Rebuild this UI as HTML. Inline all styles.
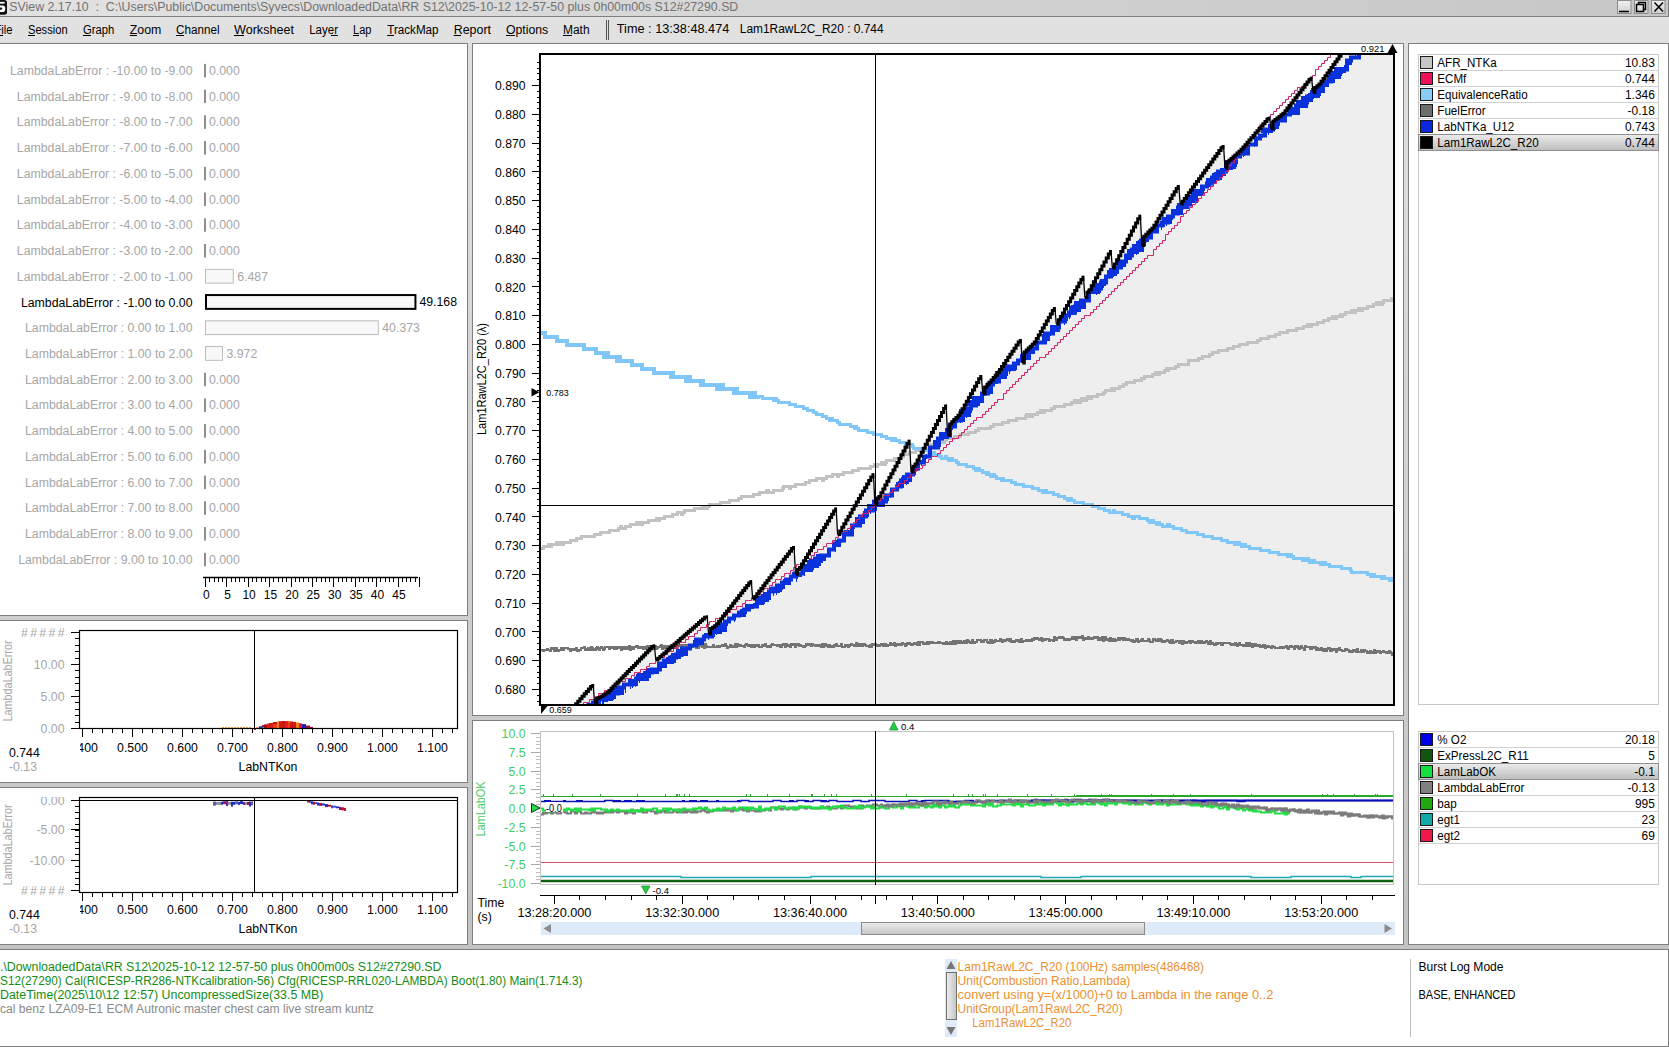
<!DOCTYPE html>
<html><head><meta charset="utf-8"><style>
html,body{margin:0;padding:0;width:1669px;height:1047px;overflow:hidden;background:#cacaca}
svg{display:block}
text{font-family:"Liberation Sans", sans-serif;white-space:pre}
</style></head><body>
<svg width="1669" height="1047" viewBox="0 0 1669 1047" xml:space="preserve">
<rect x="0" y="0" width="1669" height="1047" fill="#cccccc" />
<defs><linearGradient id="gapg" gradientUnits="userSpaceOnUse" x1="0" y1="43" x2="0" y2="949"><stop offset="0" stop-color="#e0e0e0"/><stop offset="1" stop-color="#c3c3c3"/></linearGradient></defs>
<rect x="0" y="43" width="1669" height="906" fill="url(#gapg)" />
<defs><linearGradient id="tg" x1="0" x2="1" y1="0" y2="0"><stop offset="0" stop-color="#e2e2e2"/><stop offset="1" stop-color="#c6c6c6"/></linearGradient><linearGradient id="btn" x1="0" x2="0" y1="0" y2="1"><stop offset="0" stop-color="#f0f0f0"/><stop offset="1" stop-color="#cfcfcf"/></linearGradient><linearGradient id="hl" x1="0" x2="0" y1="0" y2="1"><stop offset="0" stop-color="#ececec"/><stop offset="1" stop-color="#bdbdbd"/></linearGradient><linearGradient id="thumb" x1="0" x2="0" y1="0" y2="1"><stop offset="0" stop-color="#ededed"/><stop offset="1" stop-color="#c4c4c4"/></linearGradient><linearGradient id="vthumb" x1="0" x2="1" y1="0" y2="0"><stop offset="0" stop-color="#ededed"/><stop offset="1" stop-color="#c4c4c4"/></linearGradient></defs>
<rect x="0" y="0" width="1669" height="16" fill="url(#tg)" />
<line x1="0" y1="16.5" x2="1669" y2="16.5" stroke="#7f7f7f" stroke-width="1" />
<rect x="0" y="17" width="1669" height="26" fill="#e1e1e1" />
<rect x="-5" y="0" width="12" height="14.7" rx="2.5" fill="#111"/>
<rect x="-3" y="1.9" width="7.6" height="1.7" fill="#fff"/>
<path d="M-3 5.4 H2.6 Q5.3 5.4 5.3 8.7 Q5.3 12.1 2.6 12.1 H-3 Z" fill="#fff"/>
<path d="M-3 7.6 H1.2 Q2.2 7.6 2.2 8.7 Q2.2 9.8 1.2 9.8 H-3 Z" fill="#111"/>
<text x="9.3" y="11" font-size="12" fill="#727272" text-anchor="start" textLength="729" lengthAdjust="spacingAndGlyphs" >SView 2.17.10  :  C:\Users\Public\Documents\Syvecs\DownloadedData\RR S12\2025-10-12 12-57-50 plus 0h00m00s S12#27290.SD</text>
<rect x="1617.5" y="0.5" width="13.5" height="13" fill="url(#btn)" stroke="#8c8c8c" stroke-width="1"/>
<rect x="1634.5" y="0.5" width="13.5" height="13" fill="url(#btn)" stroke="#8c8c8c" stroke-width="1"/>
<rect x="1651.5" y="0.5" width="13.5" height="13" fill="url(#btn)" stroke="#8c8c8c" stroke-width="1"/>
<line x1="1619" y1="11.5" x2="1629" y2="11.5" stroke="#000" stroke-width="1.6" />
<rect x="1638.5" y="2.5" width="7" height="7" fill="none" stroke="#000" stroke-width="1.5"/>
<rect x="1636.5" y="4.5" width="7" height="7" fill="url(#btn)" stroke="#000" stroke-width="1.5"/>
<path d="M1654.5 2.5 L1663 11.5 M1663 2.5 L1654.5 11.5" stroke="#000" stroke-width="1.5"/>
<line x1="1668.5" y1="0" x2="1668.5" y2="16" stroke="#7f7f7f" stroke-width="1" />
<text x="-5.5" y="34" font-size="12" fill="#000" text-anchor="start" textLength="18.1" lengthAdjust="spacingAndGlyphs" >File</text>
<text x="28" y="34" font-size="12" fill="#000" text-anchor="start" textLength="39.6" lengthAdjust="spacingAndGlyphs" >Session</text>
<text x="83" y="34" font-size="12" fill="#000" text-anchor="start" textLength="31.3" lengthAdjust="spacingAndGlyphs" >Graph</text>
<text x="129.8" y="34" font-size="12" fill="#000" text-anchor="start" textLength="31.6" lengthAdjust="spacingAndGlyphs" >Zoom</text>
<text x="176.1" y="34" font-size="12" fill="#000" text-anchor="start" textLength="43.5" lengthAdjust="spacingAndGlyphs" >Channel</text>
<text x="234" y="34" font-size="12" fill="#000" text-anchor="start" textLength="60" lengthAdjust="spacingAndGlyphs" >Worksheet</text>
<text x="309.2" y="34" font-size="12" fill="#000" text-anchor="start" textLength="28.8" lengthAdjust="spacingAndGlyphs" >Layer</text>
<text x="353" y="34" font-size="12" fill="#000" text-anchor="start" textLength="18.4" lengthAdjust="spacingAndGlyphs" >Lap</text>
<text x="387.2" y="34" font-size="12" fill="#000" text-anchor="start" textLength="51.4" lengthAdjust="spacingAndGlyphs" >TrackMap</text>
<text x="453.7" y="34" font-size="12" fill="#000" text-anchor="start" textLength="37.3" lengthAdjust="spacingAndGlyphs" >Report</text>
<text x="506" y="34" font-size="12" fill="#000" text-anchor="start" textLength="42.2" lengthAdjust="spacingAndGlyphs" >Options</text>
<text x="563" y="34" font-size="12" fill="#000" text-anchor="start" textLength="26.6" lengthAdjust="spacingAndGlyphs" >Math</text>
<line x1="-1" y1="35.5" x2="3" y2="35.5" stroke="#000" stroke-width="1" />
<line x1="28" y1="35.5" x2="35" y2="35.5" stroke="#000" stroke-width="1" />
<line x1="83" y1="35.5" x2="91" y2="35.5" stroke="#000" stroke-width="1" />
<line x1="129.8" y1="35.5" x2="137" y2="35.5" stroke="#000" stroke-width="1" />
<line x1="176.1" y1="35.5" x2="184" y2="35.5" stroke="#000" stroke-width="1" />
<line x1="234" y1="35.5" x2="244" y2="35.5" stroke="#000" stroke-width="1" />
<line x1="331" y1="35.5" x2="338" y2="35.5" stroke="#000" stroke-width="1" />
<line x1="353" y1="35.5" x2="359" y2="35.5" stroke="#000" stroke-width="1" />
<line x1="387.2" y1="35.5" x2="394" y2="35.5" stroke="#000" stroke-width="1" />
<line x1="453.7" y1="35.5" x2="461" y2="35.5" stroke="#000" stroke-width="1" />
<line x1="506" y1="35.5" x2="515" y2="35.5" stroke="#000" stroke-width="1" />
<line x1="563" y1="35.5" x2="572" y2="35.5" stroke="#000" stroke-width="1" />
<line x1="606.5" y1="20" x2="606.5" y2="40" stroke="#555" stroke-width="1" />
<line x1="608.5" y1="20" x2="608.5" y2="40" stroke="#555" stroke-width="1" />
<text x="616.8" y="33" font-size="12" fill="#000" text-anchor="start" textLength="112.5" lengthAdjust="spacingAndGlyphs" >Time : 13:38:48.474</text>
<text x="739.8" y="33" font-size="12" fill="#000" text-anchor="start" textLength="143.8" lengthAdjust="spacingAndGlyphs" >Lam1RawL2C_R20 : 0.744</text>
<rect x="-2" y="43" width="470" height="573" fill="#fff" />
<rect x="-1.5" y="43.5" width="469" height="572" fill="none" stroke="#7f7f7f" stroke-width="1" />
<rect x="-2" y="620" width="470" height="163" fill="#fff" />
<rect x="-1.5" y="620.5" width="469" height="162" fill="none" stroke="#7f7f7f" stroke-width="1" />
<rect x="-2" y="787" width="470" height="158" fill="#fff" />
<rect x="-1.5" y="787.5" width="469" height="157" fill="none" stroke="#7f7f7f" stroke-width="1" />
<rect x="472" y="43" width="932" height="673" fill="#fff" />
<rect x="472.5" y="43.5" width="931" height="672" fill="none" stroke="#7f7f7f" stroke-width="1" />
<rect x="472" y="720" width="932" height="225" fill="#fff" />
<rect x="472.5" y="720.5" width="931" height="224" fill="none" stroke="#7f7f7f" stroke-width="1" />
<rect x="1408" y="43" width="261" height="902" fill="#fff" />
<rect x="1408.5" y="43.5" width="260" height="901" fill="none" stroke="#7f7f7f" stroke-width="1" />
<rect x="-2" y="949" width="1671" height="98" fill="#fff" />
<rect x="-1.5" y="949.5" width="1670" height="97" fill="none" stroke="#7f7f7f" stroke-width="1" />
<text x="192.5" y="74.9" font-size="12.3" fill="#a6a6a6" text-anchor="end">LambdaLabError : -10.00 to -9.00</text>
<rect x="204" y="63.900000000000006" width="2" height="13.5" fill="#8e8e8e" />
<text x="209" y="74.9" font-size="12.3" fill="#a6a6a6" text-anchor="start" >0.000</text>
<text x="192.5" y="100.6" font-size="12.3" fill="#a6a6a6" text-anchor="end">LambdaLabError : -9.00 to -8.00</text>
<rect x="204" y="89.63000000000001" width="2" height="13.5" fill="#8e8e8e" />
<text x="209" y="100.63000000000001" font-size="12.3" fill="#a6a6a6" text-anchor="start" >0.000</text>
<text x="192.5" y="126.4" font-size="12.3" fill="#a6a6a6" text-anchor="end">LambdaLabError : -8.00 to -7.00</text>
<rect x="204" y="115.36000000000001" width="2" height="13.5" fill="#8e8e8e" />
<text x="209" y="126.36000000000001" font-size="12.3" fill="#a6a6a6" text-anchor="start" >0.000</text>
<text x="192.5" y="152.1" font-size="12.3" fill="#a6a6a6" text-anchor="end">LambdaLabError : -7.00 to -6.00</text>
<rect x="204" y="141.09" width="2" height="13.5" fill="#8e8e8e" />
<text x="209" y="152.09" font-size="12.3" fill="#a6a6a6" text-anchor="start" >0.000</text>
<text x="192.5" y="177.8" font-size="12.3" fill="#a6a6a6" text-anchor="end">LambdaLabError : -6.00 to -5.00</text>
<rect x="204" y="166.82" width="2" height="13.5" fill="#8e8e8e" />
<text x="209" y="177.82" font-size="12.3" fill="#a6a6a6" text-anchor="start" >0.000</text>
<text x="192.5" y="203.6" font-size="12.3" fill="#a6a6a6" text-anchor="end">LambdaLabError : -5.00 to -4.00</text>
<rect x="204" y="192.55" width="2" height="13.5" fill="#8e8e8e" />
<text x="209" y="203.55" font-size="12.3" fill="#a6a6a6" text-anchor="start" >0.000</text>
<text x="192.5" y="229.3" font-size="12.3" fill="#a6a6a6" text-anchor="end">LambdaLabError : -4.00 to -3.00</text>
<rect x="204" y="218.28" width="2" height="13.5" fill="#8e8e8e" />
<text x="209" y="229.28" font-size="12.3" fill="#a6a6a6" text-anchor="start" >0.000</text>
<text x="192.5" y="255.0" font-size="12.3" fill="#a6a6a6" text-anchor="end">LambdaLabError : -3.00 to -2.00</text>
<rect x="204" y="244.01000000000002" width="2" height="13.5" fill="#8e8e8e" />
<text x="209" y="255.01000000000002" font-size="12.3" fill="#a6a6a6" text-anchor="start" >0.000</text>
<text x="192.5" y="280.7" font-size="12.3" fill="#a6a6a6" text-anchor="end">LambdaLabError : -2.00 to -1.00</text>
<rect x="205.5" y="269.34000000000003" width="27.764360000000003" height="13.8" fill="#f8f8f8" stroke="#bdbdbd" stroke-width="1" />
<text x="237.26436" y="280.74" font-size="12.3" fill="#a6a6a6" text-anchor="start" >6.487</text>
<text x="192.5" y="306.5" font-size="12.3" fill="#000" text-anchor="end">LambdaLabError : -1.00 to 0.00</text>
<rect x="206" y="295.07000000000005" width="209.43904" height="13.8" fill="#f8f8f8" stroke="#000" stroke-width="2" />
<text x="419.43904" y="306.47" font-size="12.3" fill="#000" text-anchor="start" >49.168</text>
<text x="192.5" y="332.2" font-size="12.3" fill="#a6a6a6" text-anchor="end">LambdaLabError : 0.00 to 1.00</text>
<rect x="205.5" y="320.80000000000007" width="172.79644" height="13.8" fill="#f8f8f8" stroke="#bdbdbd" stroke-width="1" />
<text x="382.29643999999996" y="332.20000000000005" font-size="12.3" fill="#a6a6a6" text-anchor="start" >40.373</text>
<text x="192.5" y="357.9" font-size="12.3" fill="#a6a6a6" text-anchor="end">LambdaLabError : 1.00 to 2.00</text>
<rect x="205.5" y="346.5300000000001" width="17.00016" height="13.8" fill="#f8f8f8" stroke="#bdbdbd" stroke-width="1" />
<text x="226.50016" y="357.93000000000006" font-size="12.3" fill="#a6a6a6" text-anchor="start" >3.972</text>
<text x="192.5" y="383.7" font-size="12.3" fill="#a6a6a6" text-anchor="end">LambdaLabError : 2.00 to 3.00</text>
<rect x="204" y="372.65999999999997" width="2" height="13.5" fill="#8e8e8e" />
<text x="209" y="383.65999999999997" font-size="12.3" fill="#a6a6a6" text-anchor="start" >0.000</text>
<text x="192.5" y="409.4" font-size="12.3" fill="#a6a6a6" text-anchor="end">LambdaLabError : 3.00 to 4.00</text>
<rect x="204" y="398.39" width="2" height="13.5" fill="#8e8e8e" />
<text x="209" y="409.39" font-size="12.3" fill="#a6a6a6" text-anchor="start" >0.000</text>
<text x="192.5" y="435.1" font-size="12.3" fill="#a6a6a6" text-anchor="end">LambdaLabError : 4.00 to 5.00</text>
<rect x="204" y="424.12" width="2" height="13.5" fill="#8e8e8e" />
<text x="209" y="435.12" font-size="12.3" fill="#a6a6a6" text-anchor="start" >0.000</text>
<text x="192.5" y="460.9" font-size="12.3" fill="#a6a6a6" text-anchor="end">LambdaLabError : 5.00 to 6.00</text>
<rect x="204" y="449.85" width="2" height="13.5" fill="#8e8e8e" />
<text x="209" y="460.85" font-size="12.3" fill="#a6a6a6" text-anchor="start" >0.000</text>
<text x="192.5" y="486.6" font-size="12.3" fill="#a6a6a6" text-anchor="end">LambdaLabError : 6.00 to 7.00</text>
<rect x="204" y="475.58000000000004" width="2" height="13.5" fill="#8e8e8e" />
<text x="209" y="486.58000000000004" font-size="12.3" fill="#a6a6a6" text-anchor="start" >0.000</text>
<text x="192.5" y="512.3" font-size="12.3" fill="#a6a6a6" text-anchor="end">LambdaLabError : 7.00 to 8.00</text>
<rect x="204" y="501.31000000000006" width="2" height="13.5" fill="#8e8e8e" />
<text x="209" y="512.3100000000001" font-size="12.3" fill="#a6a6a6" text-anchor="start" >0.000</text>
<text x="192.5" y="538.0" font-size="12.3" fill="#a6a6a6" text-anchor="end">LambdaLabError : 8.00 to 9.00</text>
<rect x="204" y="527.04" width="2" height="13.5" fill="#8e8e8e" />
<text x="209" y="538.04" font-size="12.3" fill="#a6a6a6" text-anchor="start" >0.000</text>
<text x="192.5" y="563.8" font-size="12.3" fill="#a6a6a6" text-anchor="end">LambdaLabError : 9.00 to 10.00</text>
<rect x="204" y="552.77" width="2" height="13.5" fill="#8e8e8e" />
<text x="209" y="563.77" font-size="12.3" fill="#a6a6a6" text-anchor="start" >0.000</text>
<line x1="203" y1="577.5" x2="418" y2="577.5" stroke="#000" stroke-width="1.3" />
<line x1="205.5" y1="577" x2="205.5" y2="587" stroke="#000" stroke-width="1" />
<line x1="209.5" y1="577" x2="209.5" y2="582" stroke="#000" stroke-width="1" />
<line x1="214.5" y1="577" x2="214.5" y2="582" stroke="#000" stroke-width="1" />
<line x1="218.5" y1="577" x2="218.5" y2="582" stroke="#000" stroke-width="1" />
<line x1="222.5" y1="577" x2="222.5" y2="582" stroke="#000" stroke-width="1" />
<line x1="226.5" y1="577" x2="226.5" y2="587" stroke="#000" stroke-width="1" />
<line x1="231.5" y1="577" x2="231.5" y2="582" stroke="#000" stroke-width="1" />
<line x1="235.5" y1="577" x2="235.5" y2="582" stroke="#000" stroke-width="1" />
<line x1="239.5" y1="577" x2="239.5" y2="582" stroke="#000" stroke-width="1" />
<line x1="244.5" y1="577" x2="244.5" y2="582" stroke="#000" stroke-width="1" />
<line x1="248.5" y1="577" x2="248.5" y2="587" stroke="#000" stroke-width="1" />
<line x1="252.5" y1="577" x2="252.5" y2="582" stroke="#000" stroke-width="1" />
<line x1="256.5" y1="577" x2="256.5" y2="582" stroke="#000" stroke-width="1" />
<line x1="261.5" y1="577" x2="261.5" y2="582" stroke="#000" stroke-width="1" />
<line x1="265.5" y1="577" x2="265.5" y2="582" stroke="#000" stroke-width="1" />
<line x1="269.5" y1="577" x2="269.5" y2="587" stroke="#000" stroke-width="1" />
<line x1="273.5" y1="577" x2="273.5" y2="582" stroke="#000" stroke-width="1" />
<line x1="278.5" y1="577" x2="278.5" y2="582" stroke="#000" stroke-width="1" />
<line x1="282.5" y1="577" x2="282.5" y2="582" stroke="#000" stroke-width="1" />
<line x1="286.5" y1="577" x2="286.5" y2="582" stroke="#000" stroke-width="1" />
<line x1="291.5" y1="577" x2="291.5" y2="587" stroke="#000" stroke-width="1" />
<line x1="295.5" y1="577" x2="295.5" y2="582" stroke="#000" stroke-width="1" />
<line x1="299.5" y1="577" x2="299.5" y2="582" stroke="#000" stroke-width="1" />
<line x1="303.5" y1="577" x2="303.5" y2="582" stroke="#000" stroke-width="1" />
<line x1="308.5" y1="577" x2="308.5" y2="582" stroke="#000" stroke-width="1" />
<line x1="312.5" y1="577" x2="312.5" y2="587" stroke="#000" stroke-width="1" />
<line x1="316.5" y1="577" x2="316.5" y2="582" stroke="#000" stroke-width="1" />
<line x1="321.5" y1="577" x2="321.5" y2="582" stroke="#000" stroke-width="1" />
<line x1="325.5" y1="577" x2="325.5" y2="582" stroke="#000" stroke-width="1" />
<line x1="329.5" y1="577" x2="329.5" y2="582" stroke="#000" stroke-width="1" />
<line x1="333.5" y1="577" x2="333.5" y2="587" stroke="#000" stroke-width="1" />
<line x1="338.5" y1="577" x2="338.5" y2="582" stroke="#000" stroke-width="1" />
<line x1="342.5" y1="577" x2="342.5" y2="582" stroke="#000" stroke-width="1" />
<line x1="346.5" y1="577" x2="346.5" y2="582" stroke="#000" stroke-width="1" />
<line x1="351.5" y1="577" x2="351.5" y2="582" stroke="#000" stroke-width="1" />
<line x1="355.5" y1="577" x2="355.5" y2="587" stroke="#000" stroke-width="1" />
<line x1="359.5" y1="577" x2="359.5" y2="582" stroke="#000" stroke-width="1" />
<line x1="363.5" y1="577" x2="363.5" y2="582" stroke="#000" stroke-width="1" />
<line x1="368.5" y1="577" x2="368.5" y2="582" stroke="#000" stroke-width="1" />
<line x1="372.5" y1="577" x2="372.5" y2="582" stroke="#000" stroke-width="1" />
<line x1="376.5" y1="577" x2="376.5" y2="587" stroke="#000" stroke-width="1" />
<line x1="380.5" y1="577" x2="380.5" y2="582" stroke="#000" stroke-width="1" />
<line x1="385.5" y1="577" x2="385.5" y2="582" stroke="#000" stroke-width="1" />
<line x1="389.5" y1="577" x2="389.5" y2="582" stroke="#000" stroke-width="1" />
<line x1="393.5" y1="577" x2="393.5" y2="582" stroke="#000" stroke-width="1" />
<line x1="398.5" y1="577" x2="398.5" y2="587" stroke="#000" stroke-width="1" />
<line x1="402.5" y1="577" x2="402.5" y2="582" stroke="#000" stroke-width="1" />
<line x1="406.5" y1="577" x2="406.5" y2="582" stroke="#000" stroke-width="1" />
<line x1="410.5" y1="577" x2="410.5" y2="582" stroke="#000" stroke-width="1" />
<line x1="415.5" y1="577" x2="415.5" y2="582" stroke="#000" stroke-width="1" />
<line x1="419.5" y1="577" x2="419.5" y2="587" stroke="#000" stroke-width="1" />
<text x="206.3" y="598.5" font-size="12" fill="#000" text-anchor="middle" >0</text>
<text x="227.70000000000002" y="598.5" font-size="12" fill="#000" text-anchor="middle" >5</text>
<text x="249.10000000000002" y="598.5" font-size="12" fill="#000" text-anchor="middle" >10</text>
<text x="270.5" y="598.5" font-size="12" fill="#000" text-anchor="middle" >15</text>
<text x="291.90000000000003" y="598.5" font-size="12" fill="#000" text-anchor="middle" >20</text>
<text x="313.3" y="598.5" font-size="12" fill="#000" text-anchor="middle" >25</text>
<text x="334.7" y="598.5" font-size="12" fill="#000" text-anchor="middle" >30</text>
<text x="356.1" y="598.5" font-size="12" fill="#000" text-anchor="middle" >35</text>
<text x="377.50000000000006" y="598.5" font-size="12" fill="#000" text-anchor="middle" >40</text>
<text x="398.90000000000003" y="598.5" font-size="12" fill="#000" text-anchor="middle" >45</text>
<clipPath id="sc1"><rect x="0" y="620" width="467" height="200"/></clipPath>
<g clip-path="url(#sc1)">
<line x1="75" y1="728.5" x2="79" y2="728.5" stroke="#000" stroke-width="1" />
<line x1="75" y1="722.5" x2="79" y2="722.5" stroke="#000" stroke-width="1" />
<line x1="75" y1="715.5" x2="79" y2="715.5" stroke="#000" stroke-width="1" />
<line x1="75" y1="709.5" x2="79" y2="709.5" stroke="#000" stroke-width="1" />
<line x1="75" y1="702.5" x2="79" y2="702.5" stroke="#000" stroke-width="1" />
<line x1="75" y1="696.5" x2="79" y2="696.5" stroke="#000" stroke-width="1" />
<line x1="75" y1="690.5" x2="79" y2="690.5" stroke="#000" stroke-width="1" />
<line x1="75" y1="683.5" x2="79" y2="683.5" stroke="#000" stroke-width="1" />
<line x1="75" y1="677.5" x2="79" y2="677.5" stroke="#000" stroke-width="1" />
<line x1="75" y1="670.5" x2="79" y2="670.5" stroke="#000" stroke-width="1" />
<line x1="75" y1="664.5" x2="79" y2="664.5" stroke="#000" stroke-width="1" />
<line x1="75" y1="658.5" x2="79" y2="658.5" stroke="#000" stroke-width="1" />
<line x1="75" y1="651.5" x2="79" y2="651.5" stroke="#000" stroke-width="1" />
<line x1="75" y1="645.5" x2="79" y2="645.5" stroke="#000" stroke-width="1" />
<line x1="75" y1="638.5" x2="79" y2="638.5" stroke="#000" stroke-width="1" />
<line x1="75" y1="632.5" x2="79" y2="632.5" stroke="#000" stroke-width="1" />
<line x1="71" y1="632.5" x2="79" y2="632.5" stroke="#000" stroke-width="1" />
<line x1="71" y1="664.5" x2="79" y2="664.5" stroke="#000" stroke-width="1" />
<line x1="71" y1="696.5" x2="79" y2="696.5" stroke="#000" stroke-width="1" />
<line x1="71" y1="728.5" x2="79" y2="728.5" stroke="#000" stroke-width="1" />
<text x="64.5" y="637.0" font-size="12.3" fill="#a6a6a6" text-anchor="end" textLength="43.5" lengthAdjust="spacing">#####</text>
<text x="64.5" y="669.0" font-size="12.3" fill="#a6a6a6" text-anchor="end">10.00</text>
<text x="64.5" y="701.0" font-size="12.3" fill="#a6a6a6" text-anchor="end">5.00</text>
<text x="64.5" y="733.0" font-size="12.3" fill="#a6a6a6" text-anchor="end">0.00</text>
</g>
<clipPath id="sc1x"><rect x="80" y="0" width="387" height="1047"/></clipPath>
<g clip-path="url(#sc1x)">
<line x1="82.5" y1="728" x2="82.5" y2="737" stroke="#000" stroke-width="1" />
<line x1="92.5" y1="728" x2="92.5" y2="733" stroke="#000" stroke-width="1" />
<line x1="102.5" y1="728" x2="102.5" y2="733" stroke="#000" stroke-width="1" />
<line x1="112.5" y1="728" x2="112.5" y2="733" stroke="#000" stroke-width="1" />
<line x1="122.5" y1="728" x2="122.5" y2="733" stroke="#000" stroke-width="1" />
<line x1="132.5" y1="728" x2="132.5" y2="737" stroke="#000" stroke-width="1" />
<line x1="142.5" y1="728" x2="142.5" y2="733" stroke="#000" stroke-width="1" />
<line x1="152.5" y1="728" x2="152.5" y2="733" stroke="#000" stroke-width="1" />
<line x1="162.5" y1="728" x2="162.5" y2="733" stroke="#000" stroke-width="1" />
<line x1="172.5" y1="728" x2="172.5" y2="733" stroke="#000" stroke-width="1" />
<line x1="182.5" y1="728" x2="182.5" y2="737" stroke="#000" stroke-width="1" />
<line x1="192.5" y1="728" x2="192.5" y2="733" stroke="#000" stroke-width="1" />
<line x1="202.5" y1="728" x2="202.5" y2="733" stroke="#000" stroke-width="1" />
<line x1="212.5" y1="728" x2="212.5" y2="733" stroke="#000" stroke-width="1" />
<line x1="222.5" y1="728" x2="222.5" y2="733" stroke="#000" stroke-width="1" />
<line x1="232.5" y1="728" x2="232.5" y2="737" stroke="#000" stroke-width="1" />
<line x1="242.5" y1="728" x2="242.5" y2="733" stroke="#000" stroke-width="1" />
<line x1="252.5" y1="728" x2="252.5" y2="733" stroke="#000" stroke-width="1" />
<line x1="262.5" y1="728" x2="262.5" y2="733" stroke="#000" stroke-width="1" />
<line x1="272.5" y1="728" x2="272.5" y2="733" stroke="#000" stroke-width="1" />
<line x1="282.5" y1="728" x2="282.5" y2="737" stroke="#000" stroke-width="1" />
<line x1="292.5" y1="728" x2="292.5" y2="733" stroke="#000" stroke-width="1" />
<line x1="302.5" y1="728" x2="302.5" y2="733" stroke="#000" stroke-width="1" />
<line x1="312.5" y1="728" x2="312.5" y2="733" stroke="#000" stroke-width="1" />
<line x1="322.5" y1="728" x2="322.5" y2="733" stroke="#000" stroke-width="1" />
<line x1="332.5" y1="728" x2="332.5" y2="737" stroke="#000" stroke-width="1" />
<line x1="342.5" y1="728" x2="342.5" y2="733" stroke="#000" stroke-width="1" />
<line x1="352.5" y1="728" x2="352.5" y2="733" stroke="#000" stroke-width="1" />
<line x1="362.5" y1="728" x2="362.5" y2="733" stroke="#000" stroke-width="1" />
<line x1="372.5" y1="728" x2="372.5" y2="733" stroke="#000" stroke-width="1" />
<line x1="382.5" y1="728" x2="382.5" y2="737" stroke="#000" stroke-width="1" />
<line x1="392.5" y1="728" x2="392.5" y2="733" stroke="#000" stroke-width="1" />
<line x1="402.5" y1="728" x2="402.5" y2="733" stroke="#000" stroke-width="1" />
<line x1="412.5" y1="728" x2="412.5" y2="733" stroke="#000" stroke-width="1" />
<line x1="422.5" y1="728" x2="422.5" y2="733" stroke="#000" stroke-width="1" />
<line x1="432.5" y1="728" x2="432.5" y2="737" stroke="#000" stroke-width="1" />
<line x1="442.5" y1="728" x2="442.5" y2="733" stroke="#000" stroke-width="1" />
<line x1="452.5" y1="728" x2="452.5" y2="733" stroke="#000" stroke-width="1" />
<text x="82.5" y="751.5" font-size="12.3" fill="#000" text-anchor="middle">0.400</text>
<text x="132.5" y="751.5" font-size="12.3" fill="#000" text-anchor="middle">0.500</text>
<text x="182.5" y="751.5" font-size="12.3" fill="#000" text-anchor="middle">0.600</text>
<text x="232.5" y="751.5" font-size="12.3" fill="#000" text-anchor="middle">0.700</text>
<text x="282.5" y="751.5" font-size="12.3" fill="#000" text-anchor="middle">0.800</text>
<text x="332.5" y="751.5" font-size="12.3" fill="#000" text-anchor="middle">0.900</text>
<text x="382.5" y="751.5" font-size="12.3" fill="#000" text-anchor="middle">1.000</text>
<text x="432.5" y="751.5" font-size="12.3" fill="#000" text-anchor="middle">1.100</text>
</g>
<rect x="222" y="727" width="2" height="1" fill="#f0a040"/>
<rect x="225" y="727" width="2" height="1" fill="#f0a040"/>
<rect x="228" y="727" width="2" height="1" fill="#f0a040"/>
<rect x="231" y="727" width="2" height="1" fill="#f0a040"/>
<rect x="234" y="727" width="2" height="1" fill="#f0a040"/>
<rect x="237" y="727" width="2" height="1" fill="#f0a040"/>
<rect x="240" y="727" width="2" height="1" fill="#f0a040"/>
<rect x="243" y="727" width="2" height="1" fill="#f0a040"/>
<rect x="246" y="727" width="2" height="1" fill="#f0a040"/>
<rect x="249" y="727" width="2" height="1" fill="#f0a040"/>
<rect x="254" y="728.0" width="2" height="1.5" fill="#f09030"/>
<rect x="254" y="728.0" width="2" height="2" fill="#c81010"/>
<rect x="256" y="727.3" width="3" height="1.5" fill="#f09030"/>
<rect x="259" y="726.2" width="3" height="2.3" fill="#2040c0"/>
<rect x="262" y="725.1" width="2" height="3.4" fill="#20a0e0"/>
<rect x="262" y="725.1" width="2" height="2" fill="#c81010"/>
<rect x="264" y="724.4" width="3" height="4.1" fill="#a01010"/>
<rect x="267" y="723.5" width="2" height="5.0" fill="#e02020"/>
<rect x="269" y="723.0" width="4" height="5.5" fill="#d01818"/>
<rect x="273" y="722.1" width="4" height="6.4" fill="#f04010"/>
<rect x="273" y="722.1" width="4" height="2" fill="#c81010"/>
<rect x="277" y="721.4" width="2" height="7.1" fill="#f08020"/>
<rect x="279" y="721.2" width="3" height="7.3" fill="#d01818"/>
<rect x="282" y="721.0" width="3" height="7.5" fill="#d01818"/>
<rect x="282" y="721.0" width="3" height="2" fill="#c81010"/>
<rect x="285" y="721.0" width="3" height="7.5" fill="#e02020"/>
<rect x="288" y="721.2" width="2" height="7.3" fill="#f04010"/>
<rect x="288" y="721.2" width="2" height="2" fill="#f07010"/>
<rect x="290" y="721.4" width="3" height="7.1" fill="#d01818"/>
<rect x="293" y="721.9" width="3" height="6.6" fill="#d01818"/>
<rect x="296" y="722.5" width="3" height="6.0" fill="#f08020"/>
<rect x="299" y="723.3" width="3" height="5.2" fill="#e02020"/>
<rect x="302" y="724.1" width="4" height="4.4" fill="#2020c0"/>
<rect x="306" y="725.5" width="4" height="3.0" fill="#a01040"/>
<rect x="310" y="726.9" width="3" height="1.6" fill="#a01040"/>
<rect x="79.5" y="630.5" width="378" height="98" fill="none" stroke="#000" stroke-width="1.2"/>
<line x1="254.5" y1="630" x2="254.5" y2="728" stroke="#000" stroke-width="1" />
<text x="268" y="771" font-size="12.3" fill="#000" text-anchor="middle" >LabNTKon</text>
<text x="9" y="756.5" font-size="12.3" fill="#000" text-anchor="start" >0.744</text>
<text x="9" y="770.5" font-size="12.3" fill="#a6a6a6" text-anchor="start" >-0.13</text>
<text x="0" y="0" font-size="12" fill="#a6a6a6" text-anchor="middle" transform="translate(11.5,681) rotate(-90)" textLength="81" lengthAdjust="spacingAndGlyphs">LambdaLabError</text>
<clipPath id="sc2"><rect x="0" y="797" width="467" height="200"/></clipPath>
<g clip-path="url(#sc2)">
<line x1="75" y1="800.5" x2="79" y2="800.5" stroke="#000" stroke-width="1" />
<line x1="75" y1="806.5" x2="79" y2="806.5" stroke="#000" stroke-width="1" />
<line x1="75" y1="812.5" x2="79" y2="812.5" stroke="#000" stroke-width="1" />
<line x1="75" y1="818.5" x2="79" y2="818.5" stroke="#000" stroke-width="1" />
<line x1="75" y1="824.5" x2="79" y2="824.5" stroke="#000" stroke-width="1" />
<line x1="75" y1="830.5" x2="79" y2="830.5" stroke="#000" stroke-width="1" />
<line x1="75" y1="836.5" x2="79" y2="836.5" stroke="#000" stroke-width="1" />
<line x1="75" y1="842.5" x2="79" y2="842.5" stroke="#000" stroke-width="1" />
<line x1="75" y1="848.5" x2="79" y2="848.5" stroke="#000" stroke-width="1" />
<line x1="75" y1="854.5" x2="79" y2="854.5" stroke="#000" stroke-width="1" />
<line x1="75" y1="860.5" x2="79" y2="860.5" stroke="#000" stroke-width="1" />
<line x1="75" y1="866.5" x2="79" y2="866.5" stroke="#000" stroke-width="1" />
<line x1="75" y1="872.5" x2="79" y2="872.5" stroke="#000" stroke-width="1" />
<line x1="75" y1="878.5" x2="79" y2="878.5" stroke="#000" stroke-width="1" />
<line x1="75" y1="884.5" x2="79" y2="884.5" stroke="#000" stroke-width="1" />
<line x1="75" y1="890.5" x2="79" y2="890.5" stroke="#000" stroke-width="1" />
<line x1="71" y1="800.5" x2="79" y2="800.5" stroke="#000" stroke-width="1" />
<line x1="71" y1="829.5" x2="79" y2="829.5" stroke="#000" stroke-width="1" />
<line x1="71" y1="860.5" x2="79" y2="860.5" stroke="#000" stroke-width="1" />
<line x1="71" y1="890.5" x2="79" y2="890.5" stroke="#000" stroke-width="1" />
<text x="64.5" y="804.5" font-size="12.3" fill="#a6a6a6" text-anchor="end">0.00</text>
<text x="64.5" y="834.0" font-size="12.3" fill="#a6a6a6" text-anchor="end">-5.00</text>
<text x="64.5" y="864.5" font-size="12.3" fill="#a6a6a6" text-anchor="end">-10.00</text>
<text x="64.5" y="894.5" font-size="12.3" fill="#a6a6a6" text-anchor="end" textLength="43.5" lengthAdjust="spacing">#####</text>
</g>
<clipPath id="sc2x"><rect x="80" y="0" width="387" height="1047"/></clipPath>
<g clip-path="url(#sc2x)">
<line x1="82.5" y1="892" x2="82.5" y2="901" stroke="#000" stroke-width="1" />
<line x1="92.5" y1="892" x2="92.5" y2="897" stroke="#000" stroke-width="1" />
<line x1="102.5" y1="892" x2="102.5" y2="897" stroke="#000" stroke-width="1" />
<line x1="112.5" y1="892" x2="112.5" y2="897" stroke="#000" stroke-width="1" />
<line x1="122.5" y1="892" x2="122.5" y2="897" stroke="#000" stroke-width="1" />
<line x1="132.5" y1="892" x2="132.5" y2="901" stroke="#000" stroke-width="1" />
<line x1="142.5" y1="892" x2="142.5" y2="897" stroke="#000" stroke-width="1" />
<line x1="152.5" y1="892" x2="152.5" y2="897" stroke="#000" stroke-width="1" />
<line x1="162.5" y1="892" x2="162.5" y2="897" stroke="#000" stroke-width="1" />
<line x1="172.5" y1="892" x2="172.5" y2="897" stroke="#000" stroke-width="1" />
<line x1="182.5" y1="892" x2="182.5" y2="901" stroke="#000" stroke-width="1" />
<line x1="192.5" y1="892" x2="192.5" y2="897" stroke="#000" stroke-width="1" />
<line x1="202.5" y1="892" x2="202.5" y2="897" stroke="#000" stroke-width="1" />
<line x1="212.5" y1="892" x2="212.5" y2="897" stroke="#000" stroke-width="1" />
<line x1="222.5" y1="892" x2="222.5" y2="897" stroke="#000" stroke-width="1" />
<line x1="232.5" y1="892" x2="232.5" y2="901" stroke="#000" stroke-width="1" />
<line x1="242.5" y1="892" x2="242.5" y2="897" stroke="#000" stroke-width="1" />
<line x1="252.5" y1="892" x2="252.5" y2="897" stroke="#000" stroke-width="1" />
<line x1="262.5" y1="892" x2="262.5" y2="897" stroke="#000" stroke-width="1" />
<line x1="272.5" y1="892" x2="272.5" y2="897" stroke="#000" stroke-width="1" />
<line x1="282.5" y1="892" x2="282.5" y2="901" stroke="#000" stroke-width="1" />
<line x1="292.5" y1="892" x2="292.5" y2="897" stroke="#000" stroke-width="1" />
<line x1="302.5" y1="892" x2="302.5" y2="897" stroke="#000" stroke-width="1" />
<line x1="312.5" y1="892" x2="312.5" y2="897" stroke="#000" stroke-width="1" />
<line x1="322.5" y1="892" x2="322.5" y2="897" stroke="#000" stroke-width="1" />
<line x1="332.5" y1="892" x2="332.5" y2="901" stroke="#000" stroke-width="1" />
<line x1="342.5" y1="892" x2="342.5" y2="897" stroke="#000" stroke-width="1" />
<line x1="352.5" y1="892" x2="352.5" y2="897" stroke="#000" stroke-width="1" />
<line x1="362.5" y1="892" x2="362.5" y2="897" stroke="#000" stroke-width="1" />
<line x1="372.5" y1="892" x2="372.5" y2="897" stroke="#000" stroke-width="1" />
<line x1="382.5" y1="892" x2="382.5" y2="901" stroke="#000" stroke-width="1" />
<line x1="392.5" y1="892" x2="392.5" y2="897" stroke="#000" stroke-width="1" />
<line x1="402.5" y1="892" x2="402.5" y2="897" stroke="#000" stroke-width="1" />
<line x1="412.5" y1="892" x2="412.5" y2="897" stroke="#000" stroke-width="1" />
<line x1="422.5" y1="892" x2="422.5" y2="897" stroke="#000" stroke-width="1" />
<line x1="432.5" y1="892" x2="432.5" y2="901" stroke="#000" stroke-width="1" />
<line x1="442.5" y1="892" x2="442.5" y2="897" stroke="#000" stroke-width="1" />
<line x1="452.5" y1="892" x2="452.5" y2="897" stroke="#000" stroke-width="1" />
<text x="82.5" y="913.5" font-size="12.3" fill="#000" text-anchor="middle">0.400</text>
<text x="132.5" y="913.5" font-size="12.3" fill="#000" text-anchor="middle">0.500</text>
<text x="182.5" y="913.5" font-size="12.3" fill="#000" text-anchor="middle">0.600</text>
<text x="232.5" y="913.5" font-size="12.3" fill="#000" text-anchor="middle">0.700</text>
<text x="282.5" y="913.5" font-size="12.3" fill="#000" text-anchor="middle">0.800</text>
<text x="332.5" y="913.5" font-size="12.3" fill="#000" text-anchor="middle">0.900</text>
<text x="382.5" y="913.5" font-size="12.3" fill="#000" text-anchor="middle">1.000</text>
<text x="432.5" y="913.5" font-size="12.3" fill="#000" text-anchor="middle">1.100</text>
</g>
<rect x="213" y="801.6" width="3" height="4" fill="#6060a0"/>
<rect x="216" y="801.9" width="2" height="3" fill="#9090a0"/>
<rect x="218" y="801.9" width="3" height="3" fill="#9090a0"/>
<rect x="221" y="801.7" width="2" height="3" fill="#2030c0"/>
<rect x="223" y="801.2" width="3" height="3" fill="#802080"/>
<rect x="226" y="801.1" width="2" height="5" fill="#802080"/>
<rect x="228" y="801.8" width="3" height="3" fill="#9090a0"/>
<rect x="231" y="801.7" width="2" height="5" fill="#2030c0"/>
<rect x="233" y="801.8" width="2" height="3" fill="#2030c0"/>
<rect x="235" y="801.3" width="3" height="3" fill="#6060a0"/>
<rect x="238" y="801.9" width="2" height="3" fill="#2030c0"/>
<rect x="240" y="801.1" width="3" height="3" fill="#2030c0"/>
<rect x="243" y="802.0" width="2" height="3" fill="#802080"/>
<rect x="245" y="801.9" width="2" height="3" fill="#9090a0"/>
<rect x="247" y="801.9" width="2" height="3" fill="#a01040"/>
<rect x="249" y="801.5" width="2" height="5" fill="#2030c0"/>
<rect x="251" y="801.4" width="2" height="4" fill="#6060a0"/>
<rect x="307" y="800.5" width="2" height="2" fill="#c01030"/>
<rect x="309" y="800.9" width="2" height="2" fill="#4050d0"/>
<rect x="311" y="801.3" width="2" height="3" fill="#2030c0"/>
<rect x="313" y="801.7" width="2" height="3" fill="#c01030"/>
<rect x="315" y="802.1" width="2" height="2" fill="#4050d0"/>
<rect x="317" y="802.5" width="2" height="3" fill="#2030c0"/>
<rect x="319" y="802.9" width="3" height="3" fill="#c01030"/>
<rect x="322" y="803.5" width="3" height="2" fill="#2030c0"/>
<rect x="325" y="804.1" width="3" height="3" fill="#2030c0"/>
<rect x="328" y="804.7" width="3" height="2" fill="#c01030"/>
<rect x="331" y="805.3" width="2" height="3" fill="#4050d0"/>
<rect x="333" y="805.7" width="3" height="2" fill="#4050d0"/>
<rect x="336" y="806.3" width="3" height="2" fill="#2030c0"/>
<rect x="339" y="806.9" width="2" height="3" fill="#901040"/>
<rect x="341" y="807.3" width="3" height="3" fill="#c01030"/>
<rect x="344" y="807.9" width="2" height="3" fill="#c01030"/>
<line x1="80" y1="800.5" x2="457" y2="800.5" stroke="#000" stroke-width="1"/>
<rect x="79.5" y="797.5" width="378" height="95" fill="none" stroke="#000" stroke-width="1.2"/>
<line x1="254.5" y1="797" x2="254.5" y2="892" stroke="#000" stroke-width="1" />
<text x="268" y="933" font-size="12.3" fill="#000" text-anchor="middle" >LabNTKon</text>
<text x="9" y="918.5" font-size="12.3" fill="#000" text-anchor="start" >0.744</text>
<text x="9" y="932.5" font-size="12.3" fill="#a6a6a6" text-anchor="start" >-0.13</text>
<text x="0" y="0" font-size="12" fill="#a6a6a6" text-anchor="middle" transform="translate(11.5,845) rotate(-90)" textLength="81" lengthAdjust="spacingAndGlyphs">LambdaLabError</text>
<clipPath id="mclip"><rect x="541" y="55" width="852" height="650"/></clipPath>
<line x1="537" y1="701.5" x2="539" y2="701.5" stroke="#000" stroke-width="1" />
<line x1="537" y1="695.5" x2="539" y2="695.5" stroke="#000" stroke-width="1" />
<line x1="532" y1="689.5" x2="539" y2="689.5" stroke="#000" stroke-width="1" />
<text x="525.5" y="694.2" font-size="12.2" fill="#000" text-anchor="end">0.680</text>
<line x1="537" y1="683.5" x2="539" y2="683.5" stroke="#000" stroke-width="1" />
<line x1="537" y1="677.5" x2="539" y2="677.5" stroke="#000" stroke-width="1" />
<line x1="537" y1="672.5" x2="539" y2="672.5" stroke="#000" stroke-width="1" />
<line x1="537" y1="666.5" x2="539" y2="666.5" stroke="#000" stroke-width="1" />
<line x1="532" y1="660.5" x2="539" y2="660.5" stroke="#000" stroke-width="1" />
<text x="525.5" y="665.4" font-size="12.2" fill="#000" text-anchor="end">0.690</text>
<line x1="537" y1="654.5" x2="539" y2="654.5" stroke="#000" stroke-width="1" />
<line x1="537" y1="649.5" x2="539" y2="649.5" stroke="#000" stroke-width="1" />
<line x1="537" y1="643.5" x2="539" y2="643.5" stroke="#000" stroke-width="1" />
<line x1="537" y1="637.5" x2="539" y2="637.5" stroke="#000" stroke-width="1" />
<line x1="532" y1="631.5" x2="539" y2="631.5" stroke="#000" stroke-width="1" />
<text x="525.5" y="636.7" font-size="12.2" fill="#000" text-anchor="end">0.700</text>
<line x1="537" y1="626.5" x2="539" y2="626.5" stroke="#000" stroke-width="1" />
<line x1="537" y1="620.5" x2="539" y2="620.5" stroke="#000" stroke-width="1" />
<line x1="537" y1="614.5" x2="539" y2="614.5" stroke="#000" stroke-width="1" />
<line x1="537" y1="608.5" x2="539" y2="608.5" stroke="#000" stroke-width="1" />
<line x1="532" y1="603.5" x2="539" y2="603.5" stroke="#000" stroke-width="1" />
<text x="525.5" y="607.9" font-size="12.2" fill="#000" text-anchor="end">0.710</text>
<line x1="537" y1="597.5" x2="539" y2="597.5" stroke="#000" stroke-width="1" />
<line x1="537" y1="591.5" x2="539" y2="591.5" stroke="#000" stroke-width="1" />
<line x1="537" y1="585.5" x2="539" y2="585.5" stroke="#000" stroke-width="1" />
<line x1="537" y1="580.5" x2="539" y2="580.5" stroke="#000" stroke-width="1" />
<line x1="532" y1="574.5" x2="539" y2="574.5" stroke="#000" stroke-width="1" />
<text x="525.5" y="579.2" font-size="12.2" fill="#000" text-anchor="end">0.720</text>
<line x1="537" y1="568.5" x2="539" y2="568.5" stroke="#000" stroke-width="1" />
<line x1="537" y1="562.5" x2="539" y2="562.5" stroke="#000" stroke-width="1" />
<line x1="537" y1="557.5" x2="539" y2="557.5" stroke="#000" stroke-width="1" />
<line x1="537" y1="551.5" x2="539" y2="551.5" stroke="#000" stroke-width="1" />
<line x1="532" y1="545.5" x2="539" y2="545.5" stroke="#000" stroke-width="1" />
<text x="525.5" y="550.4" font-size="12.2" fill="#000" text-anchor="end">0.730</text>
<line x1="537" y1="539.5" x2="539" y2="539.5" stroke="#000" stroke-width="1" />
<line x1="537" y1="534.5" x2="539" y2="534.5" stroke="#000" stroke-width="1" />
<line x1="537" y1="528.5" x2="539" y2="528.5" stroke="#000" stroke-width="1" />
<line x1="537" y1="522.5" x2="539" y2="522.5" stroke="#000" stroke-width="1" />
<line x1="532" y1="516.5" x2="539" y2="516.5" stroke="#000" stroke-width="1" />
<text x="525.5" y="521.6" font-size="12.2" fill="#000" text-anchor="end">0.740</text>
<line x1="537" y1="511.5" x2="539" y2="511.5" stroke="#000" stroke-width="1" />
<line x1="537" y1="505.5" x2="539" y2="505.5" stroke="#000" stroke-width="1" />
<line x1="537" y1="499.5" x2="539" y2="499.5" stroke="#000" stroke-width="1" />
<line x1="537" y1="493.5" x2="539" y2="493.5" stroke="#000" stroke-width="1" />
<line x1="532" y1="488.5" x2="539" y2="488.5" stroke="#000" stroke-width="1" />
<text x="525.5" y="492.9" font-size="12.2" fill="#000" text-anchor="end">0.750</text>
<line x1="537" y1="482.5" x2="539" y2="482.5" stroke="#000" stroke-width="1" />
<line x1="537" y1="476.5" x2="539" y2="476.5" stroke="#000" stroke-width="1" />
<line x1="537" y1="470.5" x2="539" y2="470.5" stroke="#000" stroke-width="1" />
<line x1="537" y1="465.5" x2="539" y2="465.5" stroke="#000" stroke-width="1" />
<line x1="532" y1="459.5" x2="539" y2="459.5" stroke="#000" stroke-width="1" />
<text x="525.5" y="464.1" font-size="12.2" fill="#000" text-anchor="end">0.760</text>
<line x1="537" y1="453.5" x2="539" y2="453.5" stroke="#000" stroke-width="1" />
<line x1="537" y1="447.5" x2="539" y2="447.5" stroke="#000" stroke-width="1" />
<line x1="537" y1="442.5" x2="539" y2="442.5" stroke="#000" stroke-width="1" />
<line x1="537" y1="436.5" x2="539" y2="436.5" stroke="#000" stroke-width="1" />
<line x1="532" y1="430.5" x2="539" y2="430.5" stroke="#000" stroke-width="1" />
<text x="525.5" y="435.3" font-size="12.2" fill="#000" text-anchor="end">0.770</text>
<line x1="537" y1="424.5" x2="539" y2="424.5" stroke="#000" stroke-width="1" />
<line x1="537" y1="419.5" x2="539" y2="419.5" stroke="#000" stroke-width="1" />
<line x1="537" y1="413.5" x2="539" y2="413.5" stroke="#000" stroke-width="1" />
<line x1="537" y1="407.5" x2="539" y2="407.5" stroke="#000" stroke-width="1" />
<line x1="532" y1="401.5" x2="539" y2="401.5" stroke="#000" stroke-width="1" />
<text x="525.5" y="406.6" font-size="12.2" fill="#000" text-anchor="end">0.780</text>
<line x1="537" y1="396.5" x2="539" y2="396.5" stroke="#000" stroke-width="1" />
<line x1="537" y1="390.5" x2="539" y2="390.5" stroke="#000" stroke-width="1" />
<line x1="537" y1="384.5" x2="539" y2="384.5" stroke="#000" stroke-width="1" />
<line x1="537" y1="378.5" x2="539" y2="378.5" stroke="#000" stroke-width="1" />
<line x1="532" y1="373.5" x2="539" y2="373.5" stroke="#000" stroke-width="1" />
<text x="525.5" y="377.8" font-size="12.2" fill="#000" text-anchor="end">0.790</text>
<line x1="537" y1="367.5" x2="539" y2="367.5" stroke="#000" stroke-width="1" />
<line x1="537" y1="361.5" x2="539" y2="361.5" stroke="#000" stroke-width="1" />
<line x1="537" y1="355.5" x2="539" y2="355.5" stroke="#000" stroke-width="1" />
<line x1="537" y1="350.5" x2="539" y2="350.5" stroke="#000" stroke-width="1" />
<line x1="532" y1="344.5" x2="539" y2="344.5" stroke="#000" stroke-width="1" />
<text x="525.5" y="349.1" font-size="12.2" fill="#000" text-anchor="end">0.800</text>
<line x1="537" y1="338.5" x2="539" y2="338.5" stroke="#000" stroke-width="1" />
<line x1="537" y1="332.5" x2="539" y2="332.5" stroke="#000" stroke-width="1" />
<line x1="537" y1="327.5" x2="539" y2="327.5" stroke="#000" stroke-width="1" />
<line x1="537" y1="321.5" x2="539" y2="321.5" stroke="#000" stroke-width="1" />
<line x1="532" y1="315.5" x2="539" y2="315.5" stroke="#000" stroke-width="1" />
<text x="525.5" y="320.3" font-size="12.2" fill="#000" text-anchor="end">0.810</text>
<line x1="537" y1="309.5" x2="539" y2="309.5" stroke="#000" stroke-width="1" />
<line x1="537" y1="304.5" x2="539" y2="304.5" stroke="#000" stroke-width="1" />
<line x1="537" y1="298.5" x2="539" y2="298.5" stroke="#000" stroke-width="1" />
<line x1="537" y1="292.5" x2="539" y2="292.5" stroke="#000" stroke-width="1" />
<line x1="532" y1="286.5" x2="539" y2="286.5" stroke="#000" stroke-width="1" />
<text x="525.5" y="291.5" font-size="12.2" fill="#000" text-anchor="end">0.820</text>
<line x1="537" y1="281.5" x2="539" y2="281.5" stroke="#000" stroke-width="1" />
<line x1="537" y1="275.5" x2="539" y2="275.5" stroke="#000" stroke-width="1" />
<line x1="537" y1="269.5" x2="539" y2="269.5" stroke="#000" stroke-width="1" />
<line x1="537" y1="263.5" x2="539" y2="263.5" stroke="#000" stroke-width="1" />
<line x1="532" y1="258.5" x2="539" y2="258.5" stroke="#000" stroke-width="1" />
<text x="525.5" y="262.8" font-size="12.2" fill="#000" text-anchor="end">0.830</text>
<line x1="537" y1="252.5" x2="539" y2="252.5" stroke="#000" stroke-width="1" />
<line x1="537" y1="246.5" x2="539" y2="246.5" stroke="#000" stroke-width="1" />
<line x1="537" y1="240.5" x2="539" y2="240.5" stroke="#000" stroke-width="1" />
<line x1="537" y1="235.5" x2="539" y2="235.5" stroke="#000" stroke-width="1" />
<line x1="532" y1="229.5" x2="539" y2="229.5" stroke="#000" stroke-width="1" />
<text x="525.5" y="234.0" font-size="12.2" fill="#000" text-anchor="end">0.840</text>
<line x1="537" y1="223.5" x2="539" y2="223.5" stroke="#000" stroke-width="1" />
<line x1="537" y1="217.5" x2="539" y2="217.5" stroke="#000" stroke-width="1" />
<line x1="537" y1="212.5" x2="539" y2="212.5" stroke="#000" stroke-width="1" />
<line x1="537" y1="206.5" x2="539" y2="206.5" stroke="#000" stroke-width="1" />
<line x1="532" y1="200.5" x2="539" y2="200.5" stroke="#000" stroke-width="1" />
<text x="525.5" y="205.2" font-size="12.2" fill="#000" text-anchor="end">0.850</text>
<line x1="537" y1="194.5" x2="539" y2="194.5" stroke="#000" stroke-width="1" />
<line x1="537" y1="189.5" x2="539" y2="189.5" stroke="#000" stroke-width="1" />
<line x1="537" y1="183.5" x2="539" y2="183.5" stroke="#000" stroke-width="1" />
<line x1="537" y1="177.5" x2="539" y2="177.5" stroke="#000" stroke-width="1" />
<line x1="532" y1="171.5" x2="539" y2="171.5" stroke="#000" stroke-width="1" />
<text x="525.5" y="176.5" font-size="12.2" fill="#000" text-anchor="end">0.860</text>
<line x1="537" y1="166.5" x2="539" y2="166.5" stroke="#000" stroke-width="1" />
<line x1="537" y1="160.5" x2="539" y2="160.5" stroke="#000" stroke-width="1" />
<line x1="537" y1="154.5" x2="539" y2="154.5" stroke="#000" stroke-width="1" />
<line x1="537" y1="148.5" x2="539" y2="148.5" stroke="#000" stroke-width="1" />
<line x1="532" y1="143.5" x2="539" y2="143.5" stroke="#000" stroke-width="1" />
<text x="525.5" y="147.7" font-size="12.2" fill="#000" text-anchor="end">0.870</text>
<line x1="537" y1="137.5" x2="539" y2="137.5" stroke="#000" stroke-width="1" />
<line x1="537" y1="131.5" x2="539" y2="131.5" stroke="#000" stroke-width="1" />
<line x1="537" y1="125.5" x2="539" y2="125.5" stroke="#000" stroke-width="1" />
<line x1="537" y1="120.5" x2="539" y2="120.5" stroke="#000" stroke-width="1" />
<line x1="532" y1="114.5" x2="539" y2="114.5" stroke="#000" stroke-width="1" />
<text x="525.5" y="119.0" font-size="12.2" fill="#000" text-anchor="end">0.880</text>
<line x1="537" y1="108.5" x2="539" y2="108.5" stroke="#000" stroke-width="1" />
<line x1="537" y1="102.5" x2="539" y2="102.5" stroke="#000" stroke-width="1" />
<line x1="537" y1="97.5" x2="539" y2="97.5" stroke="#000" stroke-width="1" />
<line x1="537" y1="91.5" x2="539" y2="91.5" stroke="#000" stroke-width="1" />
<line x1="532" y1="85.5" x2="539" y2="85.5" stroke="#000" stroke-width="1" />
<text x="525.5" y="90.2" font-size="12.2" fill="#000" text-anchor="end">0.890</text>
<line x1="537" y1="79.5" x2="539" y2="79.5" stroke="#000" stroke-width="1" />
<line x1="537" y1="73.5" x2="539" y2="73.5" stroke="#000" stroke-width="1" />
<line x1="537" y1="68.5" x2="539" y2="68.5" stroke="#000" stroke-width="1" />
<line x1="537" y1="62.5" x2="539" y2="62.5" stroke="#000" stroke-width="1" />
<text x="0" y="0" font-size="12" fill="#000" text-anchor="middle" transform="translate(485.5,379) rotate(-90)" textLength="112" lengthAdjust="spacingAndGlyphs">Lam1RawL2C_R20 (λ)</text>
<g clip-path="url(#mclip)">
<path d="M541.0 706.0 L575.0 706.0 L567.1 713.5 L569.3 711.1 L571.4 708.6 L573.5 706.2 L575.7 703.7 L577.8 701.2 L579.9 698.8 L582.0 696.3 L584.2 693.8 L586.3 691.4 L588.4 688.9 L590.6 686.5 L592.7 684.0 L594.7 705.0 L596.7 698.6 L598.8 697.4 L600.8 696.2 L602.9 695.0 L604.9 693.8 L606.9 692.5 L609.0 690.4 L611.0 688.3 L613.0 686.2 L615.1 684.1 L617.1 682.1 L619.2 680.0 L621.2 677.9 L623.2 675.8 L625.3 673.7 L627.3 671.6 L629.3 669.5 L631.4 667.4 L633.4 665.4 L635.5 663.3 L637.5 661.2 L639.5 659.1 L641.6 657.0 L643.6 654.9 L645.6 652.8 L647.7 650.8 L649.7 648.7 L651.8 646.6 L653.8 644.5 L655.8 660.0 L657.8 658.2 L659.9 656.4 L661.9 654.7 L663.9 652.9 L666.0 651.1 L668.0 649.3 L670.0 647.5 L672.1 645.8 L674.1 644.0 L676.1 642.2 L678.2 640.4 L680.2 638.6 L682.2 636.9 L684.2 635.1 L686.3 633.3 L688.3 631.5 L690.3 629.7 L692.4 628.0 L694.4 626.2 L696.4 624.4 L698.5 622.6 L700.5 620.8 L702.5 619.1 L704.6 617.3 L706.6 615.5 L708.6 634.0 L710.6 628.5 L712.6 627.2 L714.6 625.8 L716.6 623.8 L718.6 621.2 L720.6 618.7 L722.6 616.1 L724.6 613.5 L726.6 611.0 L728.6 608.4 L730.7 605.9 L732.7 603.3 L734.7 600.8 L736.7 598.2 L738.7 595.6 L740.7 593.1 L742.7 590.5 L744.7 588.0 L746.7 585.4 L748.7 582.9 L750.7 580.3 L752.7 599.0 L754.7 596.4 L756.8 593.7 L758.8 591.0 L760.9 588.4 L762.9 585.8 L764.9 583.1 L767.0 580.5 L769.0 577.8 L771.1 575.1 L773.1 572.5 L775.1 569.9 L777.2 567.2 L779.2 564.5 L781.3 561.9 L783.3 559.2 L785.3 556.6 L787.4 554.0 L789.4 551.3 L791.5 548.6 L793.5 546.0 L795.5 574.0 L797.5 569.6 L799.5 567.4 L801.5 564.0 L803.5 560.7 L805.5 557.4 L807.5 554.1 L809.5 550.8 L811.5 547.4 L813.5 544.1 L815.5 540.8 L817.6 537.5 L819.6 534.2 L821.6 530.8 L823.6 527.5 L825.6 524.2 L827.6 520.9 L829.6 517.6 L831.6 514.2 L833.6 510.9 L835.6 507.6 L837.6 534.5 L839.7 530.9 L841.8 527.3 L843.8 523.7 L845.9 520.1 L848.0 516.5 L850.1 512.9 L852.1 509.3 L854.2 505.7 L856.3 502.1 L858.4 498.5 L860.4 494.9 L862.5 491.3 L864.6 487.7 L866.7 484.1 L868.7 480.5 L870.8 476.9 L872.9 473.3 L874.9 504.0 L876.9 498.1 L878.9 496.4 L880.9 492.7 L882.9 488.9 L884.9 485.1 L886.9 481.3 L888.9 477.5 L890.9 473.7 L893.0 470.0 L895.0 466.2 L897.0 462.4 L899.0 458.6 L901.0 454.8 L903.0 451.0 L905.0 447.3 L907.0 443.5 L909.0 439.7 L911.0 472.0 L913.0 466.3 L915.1 463.9 L917.1 460.1 L919.1 456.1 L921.2 452.2 L923.2 448.2 L925.2 444.2 L927.3 440.3 L929.3 436.3 L931.4 432.4 L933.4 428.4 L935.4 424.4 L937.5 420.5 L939.5 416.5 L941.5 412.5 L943.6 408.6 L945.6 404.6 L947.6 435.0 L949.7 424.0 L951.8 421.8 L953.8 419.6 L955.9 417.5 L958.0 415.3 L960.0 412.5 L962.1 408.8 L964.2 405.0 L966.3 401.2 L968.4 397.5 L970.4 393.8 L972.5 390.0 L974.6 386.2 L976.6 382.5 L978.7 378.8 L980.8 375.0 L982.8 394.0 L984.9 386.9 L987.0 384.6 L989.0 382.2 L991.1 379.9 L993.2 377.6 L995.3 375.3 L997.4 372.6 L999.5 369.6 L1001.5 366.5 L1003.6 363.4 L1005.7 360.4 L1007.8 357.3 L1009.9 354.3 L1012.0 351.2 L1014.0 348.2 L1016.1 345.1 L1018.2 342.1 L1020.3 339.0 L1022.3 363.0 L1024.3 351.9 L1026.3 350.0 L1028.3 348.1 L1030.3 346.2 L1032.3 344.3 L1034.3 342.0 L1036.3 338.5 L1038.3 335.0 L1040.3 331.5 L1042.3 328.0 L1044.3 324.5 L1046.3 321.0 L1048.3 317.5 L1050.3 314.0 L1052.3 310.5 L1054.3 307.0 L1056.3 324.0 L1058.3 319.8 L1060.4 316.6 L1062.4 312.9 L1064.5 309.1 L1066.5 305.4 L1068.6 301.7 L1070.6 298.0 L1072.7 294.3 L1074.7 290.6 L1076.8 286.8 L1078.8 283.1 L1080.9 279.4 L1082.9 275.7 L1084.9 297.6 L1087.0 292.3 L1089.2 289.7 L1091.3 285.7 L1093.4 281.7 L1095.5 277.8 L1097.7 273.8 L1099.8 269.8 L1101.9 265.9 L1104.0 261.9 L1106.2 257.9 L1108.3 254.0 L1110.4 250.0 L1112.4 268.0 L1114.5 263.9 L1116.6 259.8 L1118.7 255.7 L1120.8 251.6 L1122.9 247.5 L1125.0 243.4 L1127.2 239.3 L1129.3 235.2 L1131.4 231.1 L1133.5 227.0 L1135.6 222.9 L1137.7 218.8 L1139.8 214.7 L1141.8 245.5 L1143.8 236.2 L1145.8 234.2 L1147.9 232.1 L1149.9 230.1 L1151.9 228.3 L1153.9 225.3 L1156.0 222.0 L1158.0 218.6 L1160.0 215.2 L1162.0 211.9 L1164.0 208.5 L1166.1 205.2 L1168.1 201.8 L1170.1 198.4 L1172.1 195.1 L1174.2 191.7 L1176.2 188.4 L1178.2 185.0 L1180.2 204.0 L1182.2 201.2 L1184.3 198.4 L1186.3 195.6 L1188.4 192.8 L1190.4 190.0 L1192.4 187.1 L1194.5 184.3 L1196.5 181.5 L1198.5 178.7 L1200.6 175.9 L1202.6 173.1 L1204.7 170.3 L1206.7 167.5 L1208.7 164.7 L1210.8 161.9 L1212.8 159.0 L1214.8 156.2 L1216.9 153.4 L1218.9 150.6 L1221.0 147.8 L1223.0 145.0 L1225.0 168.0 L1227.0 162.1 L1229.0 160.3 L1231.0 158.5 L1233.0 156.7 L1235.0 154.9 L1237.0 153.0 L1239.0 151.2 L1241.0 149.3 L1243.0 147.0 L1245.0 144.7 L1247.0 142.3 L1249.0 140.0 L1251.0 137.7 L1253.0 135.4 L1255.0 133.0 L1257.0 130.7 L1259.0 128.4 L1261.0 126.0 L1263.0 123.7 L1265.0 121.4 L1267.0 119.0 L1269.0 116.7 L1271.0 129.0 L1273.0 121.1 L1275.0 119.5 L1277.0 117.9 L1279.0 116.4 L1281.0 114.8 L1283.0 113.2 L1285.0 110.7 L1287.0 108.1 L1289.0 105.5 L1291.0 102.9 L1293.0 100.3 L1295.0 97.7 L1297.0 95.1 L1299.0 92.5 L1301.0 89.8 L1303.0 87.2 L1305.0 84.6 L1307.0 82.0 L1309.0 79.4 L1311.0 76.8 L1313.0 92.5 L1315.0 87.5 L1317.0 85.7 L1319.0 83.9 L1321.0 81.3 L1323.0 78.6 L1325.0 75.8 L1327.0 73.0 L1329.0 70.2 L1331.0 67.4 L1333.0 64.6 L1335.0 61.8 L1337.0 59.0 L1339.0 56.2 L1341.0 53.5 L1343.0 50.7 L1345.0 47.9 L1347.0 45.1 L1349.0 42.3 L1351.0 39.5 L1353.0 36.7 L1355.0 33.9 L1357.0 31.2 L1359.0 28.4 L1361.0 25.6 L1363.0 22.8 L1365.0 20.0 L1367.0 40.0 L1394 20 L1394 706 Z" fill="#eeeeee"/>
<path d="M541 548.5H543V546.5H548V544.5H549V546.5H551V544.5H556V542.5H558V544.5H559V542.5H561V544.5H563V542.5H570V540.5H576V538.5H581V536.5H594V534.5H600V532.5H609V530.5H618V528.5H620V526.5H621V528.5H625V526.5H630V524.5H636V522.5H639V524.5H642V522.5H648V520.5H656V518.5H657V520.5H659V518.5H664V516.5H672V514.5H677V512.5H681V514.5H682V512.5H684V510.5H694V508.5H702V506.5H705V508.5H707V506.5H709V504.5H720V502.5H729V500.5H738V498.5H741V496.5H753V494.5H759V492.5H766V490.5H768V492.5H773V490.5H782V488.5H783V486.5H789V488.5H790V486.5H795V484.5H805V482.5H809V480.5H816V478.5H822V480.5H823V478.5H826V476.5H832V474.5H837V476.5H838V474.5H843V472.5H852V470.5H858V468.5H870V466.5H874V464.5H876V466.5H877V464.5H881V462.5H882V464.5H885V462.5H886V460.5H894V458.5H900V456.5H903V454.5H909V452.5H915V450.5H922V448.5H926V446.5H929V444.5H935V442.5H941V440.5H942V442.5H944V440.5H946V438.5H954V436.5H960V434.5H968V432.5H975V430.5H978V428.5H990V426.5H993V424.5H1002V422.5H1008V420.5H1016V418.5H1025V416.5H1026V414.5H1029V416.5H1032V414.5H1037V412.5H1040V410.5H1041V412.5H1044V410.5H1051V408.5H1054V406.5H1064V404.5H1071V402.5H1074V400.5H1077V402.5H1080V400.5H1081V398.5H1083V400.5H1086V398.5H1087V396.5H1089V398.5H1091V396.5H1097V394.5H1103V392.5H1105V390.5H1111V388.5H1113V390.5H1114V388.5H1119V386.5H1123V384.5H1126V382.5H1134V380.5H1141V378.5H1144V376.5H1152V374.5H1155V372.5H1158V374.5H1159V372.5H1164V370.5H1166V368.5H1167V370.5H1168V368.5H1175V366.5H1178V364.5H1188V360.5H1198V358.5H1202V356.5H1209V354.5H1212V352.5H1218V350.5H1227V348.5H1233V346.5H1239V344.5H1247V342.5H1257V340.5H1260V338.5H1268V336.5H1275V334.5H1279V332.5H1287V330.5H1296V328.5H1303V326.5H1307V324.5H1308V326.5H1311V324.5H1317V322.5H1323V320.5H1328V318.5H1332V316.5H1335V318.5H1336V316.5H1340V314.5H1341V316.5H1342V314.5H1345V312.5H1351V310.5H1353V312.5H1355V310.5H1358V308.5H1359V310.5H1362V308.5H1367V306.5H1373V304.5H1376V302.5H1377V304.5H1378V302.5H1380V304.5H1382V302.5H1383V300.5H1391V298.5H1394" fill="none" stroke="#c2c2c2" stroke-width="3" shape-rendering="crispEdges"/>
<path d="M541 332.5H545V336.5H557V340.5H567V344.5H584V348.5H596V352.5H604V356.5H606V352.5H608V356.5H617V360.5H618V356.5H620V360.5H632V364.5H642V368.5H654V372.5H671V376.5H672V372.5H673V376.5H686V380.5H687V376.5H690V380.5H701V384.5H702V380.5H703V384.5H717V388.5H720V384.5H723V388.5H734V392.5H735V388.5H737V392.5H750V396.5H753V392.5H755V396.5H760" fill="none" stroke="#80c6f6" stroke-width="4" shape-rendering="crispEdges"/>
<path d="M760 396.5H762V398.5H773V400.5H774V398.5H776V400.5H778V402.5H789V404.5H795V406.5H803V408.5H807V410.5H813V412.5H816V414.5H822V416.5H826V418.5H829V420.5H831V418.5H832V420.5H837V422.5H839V424.5H850V426.5H854V428.5H855V426.5H856V428.5H858V430.5H867V432.5H873V434.5H881V436.5H886V438.5H891V440.5H894V438.5H895V440.5H899V442.5H905V444.5H912V446.5H913V448.5H921V450.5H928V452.5H932V454.5H933V452.5H934V454.5H939V456.5H941V458.5H945V456.5H946V458.5H948V460.5H951V458.5H952V460.5H956V462.5H958V464.5H966V466.5H973V468.5H975V470.5H978V468.5H979V470.5H982V472.5H986V474.5H987V472.5H988V474.5H990V476.5H993V474.5H994V476.5H996V478.5H1001V480.5H1002V478.5H1003V480.5H1011V482.5H1015V484.5H1023V486.5H1032V488.5H1038V490.5H1042V492.5H1044V490.5H1046V492.5H1053V494.5H1058V496.5H1064V498.5H1067V500.5H1068V498.5H1071V500.5H1074V502.5H1083V504.5H1092V506.5H1098V508.5H1104V510.5H1109V512.5H1113V510.5H1114V512.5H1122V514.5H1128V516.5H1132V518.5H1134V516.5H1139V518.5H1147V520.5H1149V522.5H1152V520.5H1153V522.5H1156V524.5H1158V522.5H1159V524.5H1162V526.5H1167V524.5H1169V526.5H1173V528.5H1181V530.5H1186V532.5H1197V534.5H1203V536.5H1212V538.5H1221V540.5H1227V542.5H1234V544.5H1236V542.5H1239V544.5H1241V546.5H1242V544.5H1245V546.5H1249V548.5H1260V550.5H1269V552.5H1278V554.5H1287V556.5H1290V554.5H1291V556.5H1293V558.5H1302V560.5H1305V558.5H1308V560.5H1309V562.5H1311V560.5H1314V562.5H1320V564.5H1323V562.5H1325V564.5H1329V566.5H1341V568.5H1350V570.5H1351V572.5H1367V574.5H1370V576.5H1371V574.5H1374V576.5H1381V578.5H1383V576.5H1384V578.5H1389V580.5H1392V578.5H1393V580.5H1394" fill="none" stroke="#80c6f6" stroke-width="3" shape-rendering="crispEdges"/>
<path d="M541.0 650.0H542.0V650.0H543.0V651.0H544.0V650.0H545.0V650.0H546.0V650.0H547.0V649.0H548.0V650.0H549.0V650.0H550.0V651.0H551.0V648.0H552.0V649.0H553.0V648.0H554.0V651.0H555.0V650.0H556.0V648.0H557.0V651.0H558.0V651.0H559.0V650.0H560.0V650.0H561.0V648.0H562.0V648.0H563.0V650.0H564.0V648.0H565.0V648.0H566.0V648.0H567.0V648.0H568.0V649.0H569.0V649.0H570.0V651.0H571.0V649.0H572.0V650.0H573.0V649.0H574.0V650.0H575.0V649.0H576.0V648.0H577.0V651.0H578.0V651.0H579.0V650.0H580.0V650.0H581.0V648.0H582.0V648.0H583.0V648.0H584.0V647.0H585.0V650.0H586.0V649.0H587.0V650.0H588.0V648.0H589.0V650.0H590.0V650.0H591.0V647.0H592.0V648.0H593.0V650.0H594.0V649.0H595.0V650.0H596.0V648.0H597.0V647.0H598.0V649.0H599.0V650.0H600.0V648.0H601.0V647.0H602.0V648.0H603.0V650.0H604.0V649.0H605.0V647.0H606.0V647.0H607.0V647.0H608.0V647.0H609.0V649.0H610.0V647.0H611.0V648.0H612.0V648.0H613.0V647.0H614.0V649.0H615.0V647.0H616.0V649.0H617.0V647.0H618.0V648.0H619.0V647.0H620.0V647.0H621.0V650.0H622.0V649.0H623.0V647.0H624.0V649.0H625.0V647.0H626.0V647.0H627.0V649.0H628.0V648.0H629.0V646.0H630.0V650.0H631.0V647.0H632.0V647.0H633.0V649.0H634.0V647.0H635.0V647.0H636.0V646.0H637.0V646.0H638.0V648.0H639.0V647.0H640.0V648.0H641.0V647.0H642.0V647.0H643.0V649.0H644.0V647.0H645.0V648.0H646.0V649.0H647.0V646.0H648.0V646.0H649.0V649.0H650.0V648.0H651.0V646.0H652.0V646.0H653.0V648.0H654.0V649.0H655.0V646.0H656.0V649.0H657.0V648.0H658.0V647.0H659.0V647.0H660.0V646.0H661.0V645.0H662.0V649.0H663.0V646.0H664.0V648.0H665.0V646.0H666.0V648.0H667.0V647.0H668.0V646.0H669.0V646.0H670.0V648.0H671.0V645.0H672.0V646.0H673.0V647.0H674.0V648.0H675.0V647.0H676.0V646.0H677.0V648.0H678.0V645.0H679.0V645.0H680.0V646.0H681.0V646.0H682.0V645.0H683.0V645.0H684.0V646.0H685.0V647.0H686.0V645.0H687.0V646.0H688.0V648.0H689.0V648.0H690.0V647.0H691.0V647.0H692.0V647.0H693.0V645.0H694.0V644.0H695.0V644.0H696.0V648.0H697.0V647.0H698.0V648.0H699.0V644.0H700.0V646.0H701.0V646.0H702.0V647.0H703.0V645.0H704.0V648.0H705.0V644.0H706.0V646.0H707.0V647.0H708.0V647.0H709.0V647.0H710.0V647.0H711.0V647.0H712.0V647.0H713.0V645.0H714.0V647.0H715.0V647.0H716.0V647.0H717.0V646.0H718.0V647.0H719.0V647.0H720.0V646.0H721.0V646.0H722.0V645.0H723.0V646.0H724.0V646.0H725.0V644.0H726.0V646.0H727.0V648.0H728.0V647.0H729.0V647.0H730.0V645.0H731.0V647.0H732.0V646.0H733.0V646.0H734.0V647.0H735.0V644.0H736.0V647.0H737.0V644.0H738.0V646.0H739.0V646.0H740.0V645.0H741.0V646.0H742.0V646.0H743.0V646.0H744.0V647.0H745.0V645.0H746.0V644.0H747.0V645.0H748.0V646.0H749.0V645.0H750.0V645.0H751.0V647.0H752.0V646.0H753.0V645.0H754.0V647.0H755.0V645.0H756.0V646.0H757.0V645.0H758.0V645.0H759.0V647.0H760.0V647.0H761.0V647.0H762.0V645.0H763.0V646.0H764.0V645.0H765.0V644.0H766.0V646.0H767.0V647.0H768.0V647.0H769.0V646.0H770.0V647.0H771.0V645.0H772.0V644.0H773.0V645.0H774.0V645.0H775.0V645.0H776.0V645.0H777.0V646.0H778.0V646.0H779.0V645.0H780.0V647.0H781.0V647.0H782.0V645.0H783.0V644.0H784.0V644.0H785.0V647.0H786.0V644.0H787.0V646.0H788.0V646.0H789.0V645.0H790.0V647.0H791.0V644.0H792.0V644.0H793.0V645.0H794.0V644.0H795.0V647.0H796.0V645.0H797.0V644.0H798.0V644.0H799.0V646.0H800.0V645.0H801.0V646.0H802.0V646.0H803.0V647.0H804.0V647.0H805.0V646.0H806.0V644.0H807.0V645.0H808.0V644.0H809.0V644.0H810.0V645.0H811.0V646.0H812.0V644.0H813.0V645.0H814.0V645.0H815.0V646.0H816.0V645.0H817.0V646.0H818.0V646.0H819.0V645.0H820.0V646.0H821.0V647.0H822.0V644.0H823.0V647.0H824.0V646.0H825.0V644.0H826.0V645.0H827.0V646.0H828.0V647.0H829.0V645.0H830.0V646.0H831.0V647.0H832.0V646.0H833.0V647.0H834.0V645.0H835.0V646.0H836.0V644.0H837.0V646.0H838.0V646.0H839.0V646.0H840.0V646.0H841.0V644.0H842.0V647.0H843.0V647.0H844.0V647.0H845.0V645.0H846.0V646.0H847.0V645.0H848.0V647.0H849.0V646.0H850.0V645.0H851.0V644.0H852.0V645.0H853.0V645.0H854.0V646.0H855.0V645.0H856.0V643.0H857.0V646.0H858.0V644.0H859.0V646.0H860.0V644.0H861.0V644.0H862.0V646.0H863.0V644.0H864.0V644.0H865.0V645.0H866.0V646.0H867.0V646.0H868.0V646.0H869.0V647.0H870.0V645.0H871.0V647.0H872.0V644.0H873.0V644.0H874.0V645.0H875.0V644.0H876.0V646.0H877.0V645.0H878.0V645.0H879.0V646.0H880.0V645.0H881.0V644.0H882.0V644.0H883.0V646.0H884.0V646.0H885.0V644.0H886.0V646.0H887.0V646.0H888.0V645.0H889.0V645.0H890.0V643.0H891.0V645.0H892.0V644.0H893.0V645.0H894.0V643.0H895.0V646.0H896.0V644.0H897.0V644.0H898.0V645.0H899.0V644.0H900.0V644.0H901.0V645.0H902.0V643.0H903.0V644.0H904.0V644.0H905.0V646.0H906.0V645.0H907.0V643.0H908.0V644.0H909.0V643.0H910.0V644.0H911.0V645.0H912.0V645.0H913.0V644.0H914.0V643.0H915.0V643.0H916.0V644.0H917.0V645.0H918.0V642.0H919.0V645.0H920.0V642.0H921.0V642.0H922.0V642.0H923.0V644.0H924.0V643.0H925.0V643.0H926.0V644.0H927.0V642.0H928.0V644.0H929.0V642.0H930.0V643.0H931.0V642.0H932.0V642.0H933.0V643.0H934.0V643.0H935.0V643.0H936.0V643.0H937.0V643.0H938.0V642.0H939.0V642.0H940.0V643.0H941.0V643.0H942.0V643.0H943.0V644.0H944.0V643.0H945.0V644.0H946.0V642.0H947.0V643.0H948.0V644.0H949.0V644.0H950.0V642.0H951.0V642.0H952.0V644.0H953.0V641.0H954.0V644.0H955.0V644.0H956.0V641.0H957.0V641.0H958.0V643.0H959.0V641.0H960.0V641.0H961.0V643.0H962.0V642.0H963.0V643.0H964.0V641.0H965.0V642.0H966.0V643.0H967.0V640.0H968.0V641.0H969.0V642.0H970.0V643.0H971.0V643.0H972.0V640.0H973.0V642.0H974.0V643.0H975.0V642.0H976.0V642.0H977.0V640.0H978.0V640.0H979.0V640.0H980.0V640.0H981.0V642.0H982.0V641.0H983.0V642.0H984.0V640.0H985.0V640.0H986.0V640.0H987.0V642.0H988.0V643.0H989.0V643.0H990.0V640.0H991.0V640.0H992.0V643.0H993.0V641.0H994.0V642.0H995.0V640.0H996.0V641.0H997.0V641.0H998.0V641.0H999.0V641.0H1000.0V639.0H1001.0V641.0H1002.0V642.0H1003.0V640.0H1004.0V640.0H1005.0V641.0H1006.0V640.0H1007.0V639.0H1008.0V639.0H1009.0V641.0H1010.0V639.0H1011.0V642.0H1012.0V641.0H1013.0V641.0H1014.0V642.0H1015.0V641.0H1016.0V640.0H1017.0V641.0H1018.0V640.0H1019.0V642.0H1020.0V641.0H1021.0V639.0H1022.0V642.0H1023.0V641.0H1024.0V641.0H1025.0V641.0H1026.0V640.0H1027.0V641.0H1028.0V641.0H1029.0V640.0H1030.0V641.0H1031.0V641.0H1032.0V639.0H1033.0V640.0H1034.0V638.0H1035.0V639.0H1036.0V639.0H1037.0V638.0H1038.0V639.0H1039.0V640.0H1040.0V640.0H1041.0V638.0H1042.0V641.0H1043.0V640.0H1044.0V639.0H1045.0V640.0H1046.0V639.0H1047.0V639.0H1048.0V639.0H1049.0V641.0H1050.0V640.0H1051.0V640.0H1052.0V640.0H1053.0V641.0H1054.0V637.0H1055.0V639.0H1056.0V640.0H1057.0V638.0H1058.0V638.0H1059.0V637.0H1060.0V638.0H1061.0V638.0H1062.0V637.0H1063.0V638.0H1064.0V640.0H1065.0V639.0H1066.0V639.0H1067.0V640.0H1068.0V639.0H1069.0V640.0H1070.0V639.0H1071.0V639.0H1072.0V637.0H1073.0V639.0H1074.0V639.0H1075.0V637.0H1076.0V640.0H1077.0V637.0H1078.0V638.0H1079.0V637.0H1080.0V638.0H1081.0V638.0H1082.0V636.0H1083.0V640.0H1084.0V638.0H1085.0V638.0H1086.0V639.0H1087.0V638.0H1088.0V637.0H1089.0V639.0H1090.0V639.0H1091.0V638.0H1092.0V639.0H1093.0V638.0H1094.0V637.0H1095.0V638.0H1096.0V637.0H1097.0V637.0H1098.0V640.0H1099.0V638.0H1100.0V640.0H1101.0V640.0H1102.0V637.0H1103.0V641.0H1104.0V640.0H1105.0V637.0H1106.0V640.0H1107.0V639.0H1108.0V639.0H1109.0V641.0H1110.0V638.0H1111.0V639.0H1112.0V641.0H1113.0V640.0H1114.0V639.0H1115.0V641.0H1116.0V640.0H1117.0V640.0H1118.0V638.0H1119.0V640.0H1120.0V639.0H1121.0V638.0H1122.0V638.0H1123.0V640.0H1124.0V638.0H1125.0V639.0H1126.0V640.0H1127.0V640.0H1128.0V639.0H1129.0V640.0H1130.0V640.0H1131.0V641.0H1132.0V640.0H1133.0V642.0H1134.0V642.0H1135.0V641.0H1136.0V639.0H1137.0V639.0H1138.0V642.0H1139.0V641.0H1140.0V641.0H1141.0V640.0H1142.0V639.0H1143.0V641.0H1144.0V641.0H1145.0V641.0H1146.0V641.0H1147.0V641.0H1148.0V639.0H1149.0V640.0H1150.0V642.0H1151.0V642.0H1152.0V642.0H1153.0V639.0H1154.0V639.0H1155.0V640.0H1156.0V641.0H1157.0V641.0H1158.0V639.0H1159.0V641.0H1160.0V639.0H1161.0V640.0H1162.0V642.0H1163.0V641.0H1164.0V642.0H1165.0V641.0H1166.0V641.0H1167.0V640.0H1168.0V641.0H1169.0V642.0H1170.0V643.0H1171.0V640.0H1172.0V640.0H1173.0V643.0H1174.0V642.0H1175.0V642.0H1176.0V641.0H1177.0V641.0H1178.0V641.0H1179.0V643.0H1180.0V641.0H1181.0V642.0H1182.0V644.0H1183.0V641.0H1184.0V642.0H1185.0V643.0H1186.0V643.0H1187.0V642.0H1188.0V642.0H1189.0V641.0H1190.0V643.0H1191.0V641.0H1192.0V641.0H1193.0V642.0H1194.0V642.0H1195.0V643.0H1196.0V642.0H1197.0V643.0H1198.0V641.0H1199.0V641.0H1200.0V643.0H1201.0V641.0H1202.0V642.0H1203.0V643.0H1204.0V643.0H1205.0V642.0H1206.0V641.0H1207.0V642.0H1208.0V644.0H1209.0V642.0H1210.0V641.0H1211.0V644.0H1212.0V643.0H1213.0V644.0H1214.0V645.0H1215.0V645.0H1216.0V643.0H1217.0V644.0H1218.0V643.0H1219.0V643.0H1220.0V643.0H1221.0V645.0H1222.0V645.0H1223.0V643.0H1224.0V643.0H1225.0V643.0H1226.0V643.0H1227.0V643.0H1228.0V643.0H1229.0V643.0H1230.0V644.0H1231.0V645.0H1232.0V644.0H1233.0V645.0H1234.0V644.0H1235.0V643.0H1236.0V645.0H1237.0V646.0H1238.0V644.0H1239.0V643.0H1240.0V645.0H1241.0V645.0H1242.0V645.0H1243.0V646.0H1244.0V645.0H1245.0V646.0H1246.0V643.0H1247.0V645.0H1248.0V646.0H1249.0V643.0H1250.0V644.0H1251.0V646.0H1252.0V647.0H1253.0V644.0H1254.0V646.0H1255.0V644.0H1256.0V646.0H1257.0V646.0H1258.0V645.0H1259.0V645.0H1260.0V647.0H1261.0V646.0H1262.0V647.0H1263.0V645.0H1264.0V645.0H1265.0V648.0H1266.0V647.0H1267.0V646.0H1268.0V646.0H1269.0V647.0H1270.0V647.0H1271.0V648.0H1272.0V646.0H1273.0V647.0H1274.0V647.0H1275.0V648.0H1276.0V648.0H1277.0V648.0H1278.0V648.0H1279.0V648.0H1280.0V647.0H1281.0V647.0H1282.0V648.0H1283.0V648.0H1284.0V647.0H1285.0V647.0H1286.0V646.0H1287.0V648.0H1288.0V649.0H1289.0V647.0H1290.0V646.0H1291.0V646.0H1292.0V647.0H1293.0V647.0H1294.0V649.0H1295.0V646.0H1296.0V647.0H1297.0V646.0H1298.0V648.0H1299.0V649.0H1300.0V647.0H1301.0V646.0H1302.0V648.0H1303.0V648.0H1304.0V650.0H1305.0V646.0H1306.0V647.0H1307.0V647.0H1308.0V647.0H1309.0V647.0H1310.0V649.0H1311.0V649.0H1312.0V647.0H1313.0V647.0H1314.0V648.0H1315.0V647.0H1316.0V650.0H1317.0V648.0H1318.0V649.0H1319.0V650.0H1320.0V649.0H1321.0V648.0H1322.0V650.0H1323.0V651.0H1324.0V649.0H1325.0V649.0H1326.0V651.0H1327.0V649.0H1328.0V648.0H1329.0V648.0H1330.0V651.0H1331.0V651.0H1332.0V649.0H1333.0V650.0H1334.0V650.0H1335.0V649.0H1336.0V652.0H1337.0V650.0H1338.0V649.0H1339.0V648.0H1340.0V650.0H1341.0V650.0H1342.0V651.0H1343.0V651.0H1344.0V651.0H1345.0V649.0H1346.0V649.0H1347.0V650.0H1348.0V650.0H1349.0V652.0H1350.0V651.0H1351.0V651.0H1352.0V652.0H1353.0V650.0H1354.0V651.0H1355.0V650.0H1356.0V652.0H1357.0V649.0H1358.0V652.0H1359.0V652.0H1360.0V652.0H1361.0V650.0H1362.0V650.0H1363.0V652.0H1364.0V650.0H1365.0V651.0H1366.0V651.0H1367.0V653.0H1368.0V652.0H1369.0V653.0H1370.0V651.0H1371.0V653.0H1372.0V652.0H1373.0V653.0H1374.0V650.0H1375.0V653.0H1376.0V651.0H1377.0V652.0H1378.0V652.0H1379.0V651.0H1380.0V653.0H1381.0V652.0H1382.0V652.0H1383.0V651.0H1384.0V652.0H1385.0V652.0H1386.0V653.0H1387.0V652.0H1388.0V653.0H1389.0V651.0H1390.0V652.0H1391.0V653.0H1392.0V655.0H1393.0V654.0H1394.0V654.0" fill="none" stroke="#747474" stroke-width="2"/>
<path d="M541.0 729.5H545.0V729.5H553.0V726.5H561.0V723.5H566.0V720.5H572.0V717.5H576.0V714.5H584.0V708.5H588.0V705.5H593.0V702.5H598.0V699.5H604.0V696.5H612.0V693.5H618.0V687.5H624.0V684.5H632.0V681.5H636.0V678.5H642.0V675.5H647.0V672.5H652.0V669.5H660.0V663.5H664.0V660.5H670.0V657.5H676.0V654.5H682.0V648.5H690.0V645.5H696.0V639.5H704.0V636.5H712.0V630.5H716.0V627.5H720.0V624.5H725.0V621.5H729.0V618.5H734.0V615.5H739.0V612.5H744.0V609.5H749.0V606.5H757.0V600.5H761.0V597.5H769.0V591.5H773.0V588.5H777.0V585.5H782.0V582.5H786.0V579.5H791.0V576.5H795.0V573.5H803.0V567.5H811.0V561.5H815.0V558.5H821.0V555.5H829.0V549.5H834.0V543.5H839.0V540.5H844.0V534.5H852.0V525.5H860.0V516.5H866.0V510.5H874.0V501.5H878.0V501.5H886.0V495.5H892.0V489.5H897.0V486.5H901.0V480.5H907.0V474.5H913.0V468.5H918.0V462.5H924.0V456.5H930.0V447.5H938.0V438.5H942.0V435.5H950.0V426.5H955.0V420.5H961.0V414.5H967.0V408.5H971.0V405.5H976.0V399.5H982.0V393.5H988.0V384.5H993.0V381.5H999.0V372.5H1004.0V369.5H1009.0V366.5H1014.0V363.5H1018.0V360.5H1023.0V354.5H1027.0V351.5H1032.0V348.5H1037.0V342.5H1045.0V333.5H1053.0V327.5H1059.0V321.5H1065.0V315.5H1069.0V312.5H1075.0V306.5H1081.0V300.5H1089.0V291.5H1093.0V288.5H1101.0V282.5H1106.0V276.5H1111.0V270.5H1115.0V267.5H1121.0V261.5H1126.0V255.5H1132.0V249.5H1137.0V246.5H1141.0V240.5H1145.0V237.5H1151.0V231.5H1157.0V225.5H1162.0V222.5H1168.0V216.5H1173.0V213.5H1178.0V207.5H1182.0V204.5H1190.0V198.5H1194.0V192.5H1202.0V186.5H1207.0V183.5H1212.0V177.5H1218.0V171.5H1226.0V165.5H1230.0V162.5H1235.0V156.5H1240.0V153.5H1248.0V144.5H1256.0V138.5H1260.0V135.5H1265.0V129.5H1273.0V123.5H1277.0V120.5H1285.0V114.5H1290.0V111.5H1296.0V105.5H1301.0V102.5H1307.0V96.5H1312.0V93.5H1318.0V87.5H1322.0V84.5H1326.0V81.5H1331.0V75.5H1339.0V69.5H1347.0V60.5H1351.0V57.5H1359.0V51.5H1365.0V45.5H1373.0V36.5H1381.0V30.5H1387.0V24.5" fill="none" stroke="#0a32dc" stroke-width="4"/>
<path d="M1296 100h12v8h-12ZM1242 148h6v5h-6ZM1310 90h10v8h-10ZM898 481h6v7h-6ZM1311 88h10v8h-10ZM1162 217h10v7h-10ZM1290 107h6v6h-6ZM647 668h12v6h-12ZM968 401h12v5h-12ZM945 428h6v6h-6ZM1004 365h12v6h-12ZM1288 107h10v8h-10ZM1020 354h8v6h-8ZM1092 283h12v5h-12ZM1308 93h6v6h-6ZM646 668h12v5h-12ZM792 572h10v5h-10ZM817 555h6v8h-6ZM1301 96h12v6h-12ZM844 530h8v5h-8ZM801 565h12v7h-12ZM802 564h12v6h-12ZM1334 67h12v6h-12ZM713 627h6v6h-6ZM809 559h10v8h-10ZM555 724h8v6h-8ZM704 633h6v5h-6ZM801 565h10v7h-10ZM1279 115h8v7h-8ZM1132 244h12v8h-12ZM608 692h8v7h-8ZM643 671h8v7h-8ZM695 638h8v7h-8ZM1212 173h10v5h-10ZM1042 334h8v7h-8ZM1301 98h8v6h-8ZM776 584h6v8h-6ZM1376 30h12v5h-12ZM992 378h6v5h-6ZM1050 325h10v7h-10ZM901 478h6v6h-6ZM783 579h8v6h-8ZM693 640h6v6h-6ZM1212 174h8v5h-8ZM1069 306h12v5h-12ZM1330 71h12v5h-12ZM694 638h10v7h-10ZM1100 279h6v7h-6ZM970 400h8v6h-8ZM636 674h12v6h-12ZM1109 268h10v6h-10ZM761 594h8v8h-8ZM763 593h8v5h-8ZM1027 347h8v7h-8ZM670 655h6v8h-6ZM1225 160h12v7h-12ZM1268 124h6v5h-6ZM638 674h8v6h-8ZM1070 308h6v7h-6ZM902 475h10v7h-10ZM1191 191h12v5h-12ZM1093 285h8v8h-8ZM757 596h8v8h-8ZM1127 249h12v5h-12ZM809 559h12v7h-12ZM1134 245h6v6h-6ZM957 415h8v6h-8ZM1173 209h6v5h-6ZM745 604h8v5h-8ZM875 499h10v8h-10ZM901 478h6v5h-6ZM1118 260h8v7h-8ZM756 597h8v8h-8ZM933 440h8v7h-8ZM803 564h8v5h-8ZM677 650h6v7h-6ZM1023 352h8v8h-8ZM1271 121h8v8h-8ZM863 511h6v6h-6ZM896 482h8v6h-8ZM1214 172h8v8h-8ZM714 626h8v8h-8ZM1186 195h12v8h-12ZM957 414h8v8h-8ZM715 624h12v8h-12ZM603 694h10v7h-10ZM1346 59h6v6h-6ZM1171 209h12v6h-12ZM769 588h10v5h-10ZM671 653h10v6h-10ZM1191 193h6v5h-6ZM1388 19h12v8h-12ZM612 688h12v7h-12ZM759 596h6v7h-6ZM875 499h8v8h-8ZM576 711h8v6h-8ZM568 716h10v8h-10ZM901 477h8v7h-8ZM807 560h12v8h-12ZM666 657h8v7h-8ZM995 371h12v8h-12ZM657 662h10v6h-10ZM628 679h10v7h-10ZM1060 316h8v5h-8ZM1261 128h12v5h-12ZM1228 159h10v5h-10ZM1321 80h8v7h-8ZM1107 270h10v6h-10ZM1206 178h10v5h-10ZM1220 168h6v8h-6ZM959 409h12v8h-12ZM1331 71h10v8h-10ZM1138 240h8v6h-8ZM1327 75h8v8h-8ZM1193 189h10v6h-10ZM983 386h10v8h-10ZM1224 162h12v7h-12ZM1136 241h10v5h-10ZM1307 94h6v7h-6ZM1313 86h12v7h-12ZM587 703h12v7h-12ZM939 432h10v7h-10ZM602 695h6v7h-6ZM816 554h10v7h-10ZM763 592h8v8h-8ZM867 504h10v7h-10ZM567 717h8v5h-8ZM1074 301h12v8h-12ZM595 700h6v8h-6ZM1288 107h12v8h-12ZM573 713h8v7h-8ZM803 564h10v8h-10ZM1370 36h8v6h-8ZM770 587h10v6h-10ZM740 609h6v8h-6ZM544 727h12v5h-12ZM1071 305h10v7h-10ZM835 540h6v7h-6ZM1225 162h8v8h-8ZM1124 254h8v6h-8ZM676 649h12v7h-12ZM855 517h10v7h-10ZM1177 203h12v6h-12ZM1090 287h10v7h-10ZM1141 237h8v5h-8ZM1381 28h6v7h-6ZM637 673h12v8h-12ZM575 710h12v8h-12ZM586 704h10v8h-10ZM972 396h12v7h-12Z" fill="#0a32dc"/>
<path d="M1148.5 235v4M1148.5 235v4M824.5 554v6M1256.5 139v6M1022.5 357v5M1141.5 243v5M1246.5 148v6M647.5 673v5M1109.5 275v4M697.5 641v3M1038.5 343v7M1364.5 47v4M1124.5 259v5M1077.5 306v5M1333.5 75v7M582.5 712v6M641.5 676v3M783.5 583v6M1384.5 29v3M821.5 556v3M1001.5 373v5M858.5 521v4M1220.5 172v6M781.5 584v5M1065.5 317v6M1373.5 39v5M1130.5 254v5M1220.5 172v4M689.5 646v3M1333.5 75v4M955.5 422v3M815.5 560v3M1021.5 359v4M1071.5 311v4M734.5 617v5M851.5 528v4M584.5 710v3M1298.5 105v4M607.5 696v4M951.5 426v7M712.5 631v6M952.5 425v5M1226.5 167v5M589.5 707v5M1098.5 285v5M776.5 588v7M1275.5 123v7M917.5 465v6M1156.5 228v4M563.5 724v4M641.5 676v3M845.5 535v6M804.5 569v5M549.5 729v4M1355.5 55v3M988.5 387v6M1213.5 178v6M879.5 501v6M1243.5 151v6M1378.5 35v3M1347.5 62v5M1139.5 244v4M1313.5 93v3M1030.5 350v4M870.5 508v4M1098.5 285v6M850.5 529v6M841.5 539v4M1309.5 96v4M620.5 688v4M1170.5 216v4M1171.5 215v5M1118.5 265v4M630.5 682v4M838.5 542v5M549.5 729v5M883.5 499v4M997.5 377v7M714.5 630v7M813.5 562v6M632.5 681v7M906.5 478v7M727.5 621v5M1140.5 244v4M773.5 590v6M1345.5 64v4M696.5 642v4M1381.5 32v4M1079.5 303v5M1087.5 296v4M1064.5 318v7M1268.5 129v6M969.5 407v5M637.5 678v6M1126.5 257v5M1105.5 278v5M867.5 511v4M1050.5 331v5M978.5 398v3M1073.5 309v5M1044.5 337v5M1331.5 76v4M938.5 440v7M1167.5 219v4M1166.5 219v7M882.5 500v6M648.5 672v7M957.5 419v4M1254.5 141v6M1337.5 72v6M1218.5 174v5M1384.5 29v3M1279.5 120v6M753.5 603v6M926.5 454v5M1275.5 123v4M778.5 587v6M603.5 699v5M1209.5 182v5M746.5 608v6M1266.5 130v6M1007.5 369v7M1217.5 175v4M851.5 528v3M572.5 718v4M1275.5 123v6M640.5 677v4M870.5 507v6M1064.5 317v7M602.5 699v7M716.5 629v6M1285.5 115v6M708.5 634v6M906.5 477v3M829.5 550v4M1075.5 307v4M1053.5 329v6M694.5 643v4M1129.5 254v5M650.5 671v3M1339.5 69v5M844.5 536v4M1385.5 28v6M1166.5 220v4M804.5 569v5M665.5 662v6M901.5 482v6M888.5 496v5M971.5 406v7M835.5 546v6M740.5 612v5M782.5 584v6M784.5 583v6M1115.5 268v5M1333.5 75v5M1172.5 215v5M921.5 460v3M896.5 487v4M915.5 468v7M789.5 579v6M1111.5 272v4M890.5 494v4M1301.5 103v4M898.5 486v4M1237.5 156v6M1042.5 339v5M625.5 686v7M616.5 691v4M858.5 520v6M1109.5 275v4M1303.5 101v7M560.5 726v6M939.5 439v4M935.5 444v4M1110.5 273v5M1364.5 47v7M1383.5 30v5M1244.5 150v6M1136.5 248v7M597.5 702v5M881.5 500v6M726.5 622v7M718.5 627v4M662.5 663v5M1170.5 216v3M682.5 651v6M1069.5 313v6M756.5 602v6M1161.5 224v6M642.5 676v5M554.5 728v6M1342.5 67v7M561.5 725v4M995.5 379v5M635.5 680v6M797.5 574v5M646.5 673v5M651.5 671v3M975.5 400v4M1201.5 189v4M892.5 492v3M725.5 622v5M1014.5 363v5M1263.5 133v3M1262.5 134v4M1364.5 47v5M886.5 498v5M1274.5 124v7M891.5 492v3M671.5 658v6M1164.5 221v6M673.5 656v5M565.5 723v3M796.5 575v7M1086.5 296v6M580.5 713v5M607.5 696v4M635.5 680v7M820.5 557v5M1096.5 288v7M1344.5 65v5M966.5 411v7M875.5 503v4M1168.5 218v4M853.5 526v5M945.5 432v4M906.5 478v5M583.5 711v6M593.5 705v5M1005.5 370v5M730.5 619v3M856.5 523v4M951.5 426v4M1177.5 210v5M548.5 729v5M1361.5 50v3M1044.5 337v7M851.5 528v5M854.5 525v4M1058.5 324v5M808.5 565v5M979.5 397v6M586.5 709v3M754.5 603v4M1216.5 175v5M1271.5 126v5M783.5 583v6M613.5 693v7M1246.5 148v4M810.5 564v6M1210.5 181v6M589.5 707v6M581.5 712v5M1009.5 367v7M1083.5 300v3M1334.5 74v6M1033.5 347v3M1166.5 219v5M1118.5 266v7M1319.5 88v3M1204.5 186v5M1179.5 208v5M921.5 461v5M641.5 676v4M1164.5 221v3M639.5 677v6M1106.5 277v5M637.5 679v3M804.5 569v7M1016.5 362v7M720.5 626v5M996.5 378v6M645.5 674v6M942.5 436v3M907.5 476v5M1113.5 270v7M960.5 417v6M870.5 508v6M630.5 683v6M682.5 651v5M712.5 631v4M680.5 652v4M1043.5 338v5M870.5 507v5M1256.5 140v4M1036.5 344v5M1373.5 39v4M1133.5 251v4M762.5 597v6M1029.5 351v4M595.5 703v6M861.5 517v6M908.5 476v5M1016.5 363v7M1313.5 93v5M954.5 423v4M1180.5 207v3M801.5 571v6M570.5 719v6M1023.5 357v5" stroke="#0a32dc" stroke-width="1" fill="none"/>
<path d="M541.5 741.5H544.5V738.5H547.5V735.5H550.5V732.5H553.5V729.5H556.5V726.5H559.5V723.5H562.5V723.5H565.5V720.5H568.5V717.5H571.5V714.5H574.5V711.5H577.5V708.5H580.5V705.5H583.5V702.5H586.5V702.5H589.5V699.5H592.5V699.5H595.5V696.5H598.5V693.5H601.5V693.5H604.5V690.5H607.5V690.5H610.5V687.5H613.5V684.5H616.5V684.5H619.5V681.5H622.5V681.5H625.5V678.5H628.5V678.5H631.5V675.5H634.5V672.5H637.5V672.5H640.5V669.5H643.5V669.5H646.5V666.5H649.5V663.5H652.5V663.5H655.5V660.5H658.5V657.5H661.5V657.5H664.5V654.5H667.5V651.5H670.5V651.5H673.5V648.5H676.5V645.5H679.5V642.5H682.5V642.5H685.5V639.5H688.5V636.5H691.5V636.5H694.5V633.5H697.5V630.5H700.5V627.5H703.5V627.5H706.5V624.5H709.5V621.5H712.5V621.5H715.5V618.5H718.5V618.5H721.5V615.5H724.5V615.5H727.5V612.5H730.5V609.5H733.5V609.5H736.5V606.5H739.5V606.5H742.5V603.5H745.5V600.5H748.5V600.5H751.5V597.5H754.5V597.5H757.5V594.5H760.5V591.5H763.5V588.5H766.5V588.5H769.5V585.5H772.5V582.5H775.5V579.5H778.5V579.5H781.5V576.5H784.5V573.5H787.5V573.5H790.5V570.5H793.5V567.5H796.5V564.5H799.5V564.5H802.5V561.5H805.5V558.5H808.5V558.5H811.5V555.5H814.5V552.5H817.5V549.5H820.5V549.5H823.5V546.5H826.5V543.5H829.5V543.5H832.5V540.5H835.5V537.5H838.5V534.5H841.5V531.5H844.5V531.5H847.5V528.5H850.5V525.5H853.5V522.5H856.5V519.5H859.5V516.5H862.5V513.5H865.5V513.5H868.5V510.5H871.5V507.5H874.5V504.5H877.5V501.5H880.5V498.5H883.5V495.5H886.5V495.5H889.5V492.5H892.5V489.5H895.5V486.5H898.5V483.5H901.5V483.5H904.5V480.5H907.5V477.5H910.5V474.5H913.5V471.5H916.5V468.5H919.5V468.5H922.5V465.5H925.5V462.5H928.5V459.5H931.5V456.5H934.5V456.5H937.5V453.5H940.5V450.5H943.5V447.5H946.5V444.5H949.5V441.5H952.5V438.5H955.5V438.5H958.5V435.5H961.5V432.5H964.5V429.5H967.5V426.5H970.5V423.5H973.5V420.5H976.5V417.5H979.5V417.5H982.5V414.5H985.5V411.5H988.5V408.5H991.5V405.5H994.5V402.5H997.5V399.5H1000.5V399.5H1003.5V393.5H1006.5V390.5H1009.5V387.5H1012.5V384.5H1015.5V381.5H1018.5V378.5H1021.5V375.5H1024.5V372.5H1027.5V369.5H1030.5V366.5H1033.5V363.5H1036.5V360.5H1039.5V357.5H1042.5V357.5H1045.5V354.5H1048.5V351.5H1051.5V348.5H1054.5V345.5H1057.5V342.5H1060.5V339.5H1063.5V336.5H1066.5V333.5H1069.5V330.5H1072.5V327.5H1075.5V324.5H1078.5V321.5H1081.5V318.5H1084.5V315.5H1087.5V315.5H1090.5V312.5H1093.5V309.5H1096.5V306.5H1099.5V303.5H1102.5V300.5H1105.5V297.5H1108.5V294.5H1111.5V291.5H1114.5V288.5H1117.5V285.5H1120.5V282.5H1123.5V279.5H1126.5V276.5H1129.5V273.5H1132.5V270.5H1135.5V267.5H1138.5V264.5H1141.5V261.5H1144.5V258.5H1147.5V255.5H1150.5V255.5H1153.5V249.5H1156.5V246.5H1159.5V243.5H1162.5V240.5H1165.5V234.5H1168.5V231.5H1171.5V228.5H1174.5V225.5H1177.5V222.5H1180.5V216.5H1183.5V213.5H1186.5V210.5H1189.5V207.5H1192.5V204.5H1195.5V201.5H1198.5V198.5H1201.5V195.5H1204.5V192.5H1207.5V189.5H1210.5V186.5H1213.5V183.5H1216.5V180.5H1219.5V177.5H1222.5V174.5H1225.5V171.5H1228.5V165.5H1231.5V162.5H1234.5V159.5H1237.5V153.5H1240.5V150.5H1243.5V147.5H1246.5V144.5H1249.5V138.5H1252.5V135.5H1255.5V132.5H1258.5V126.5H1261.5V123.5H1264.5V120.5H1267.5V117.5H1270.5V114.5H1273.5V111.5H1276.5V108.5H1279.5V105.5H1282.5V102.5H1285.5V99.5H1288.5V96.5H1291.5V93.5H1294.5V90.5H1297.5V87.5H1300.5V87.5H1303.5V84.5H1306.5V81.5H1309.5V78.5H1312.5V75.5H1315.5V69.5H1318.5V66.5H1321.5V63.5H1324.5V60.5H1327.5V57.5H1330.5V54.5H1333.5V51.5H1336.5V48.5H1339.5V45.5H1342.5V42.5H1345.5V39.5H1348.5V36.5H1351.5V33.5H1354.5V30.5H1357.5V27.5H1360.5V24.5H1363.5V21.5H1366.5V18.5H1369.5V15.5H1372.5V12.5H1375.5V9.5H1378.5V6.5H1381.5V3.5H1384.5V0.5H1387.5V-2.5H1390.5V-5.5H1393.5V-8.5" fill="none" stroke="#d4206a" stroke-width="1"/>
<path d="M565.0 716.0H567.1V713.5H569.3V711.1H571.4V708.6H573.5V706.2H575.7V703.7H577.8V701.2H579.9V698.8H582.0V696.3H584.2V693.8H586.3V691.4H588.4V688.9H590.6V686.5H592.7V684.0M594.7 705.0H596.7V698.6H598.8V697.4H600.8V696.2H602.9V695.0H604.9V693.8H606.9V692.5H609.0V690.4H611.0V688.3H613.0V686.2H615.1V684.1H617.1V682.1H619.2V680.0H621.2V677.9H623.2V675.8H625.3V673.7H627.3V671.6H629.3V669.5H631.4V667.4H633.4V665.4H635.5V663.3H637.5V661.2H639.5V659.1H641.6V657.0H643.6V654.9H645.6V652.8H647.7V650.8H649.7V648.7H651.8V646.6H653.8V644.5M655.8 660.0H657.8V658.2H659.9V656.4H661.9V654.7H663.9V652.9H666.0V651.1H668.0V649.3H670.0V647.5H672.1V645.8H674.1V644.0H676.1V642.2H678.2V640.4H680.2V638.6H682.2V636.9H684.2V635.1H686.3V633.3H688.3V631.5H690.3V629.7H692.4V628.0H694.4V626.2H696.4V624.4H698.5V622.6H700.5V620.8H702.5V619.1H704.6V617.3H706.6V615.5M708.6 634.0H710.6V628.5H712.6V627.2H714.6V625.8H716.6V623.8H718.6V621.2H720.6V618.7H722.6V616.1H724.6V613.5H726.6V611.0H728.6V608.4H730.7V605.9H732.7V603.3H734.7V600.8H736.7V598.2H738.7V595.6H740.7V593.1H742.7V590.5H744.7V588.0H746.7V585.4H748.7V582.9H750.7V580.3M752.7 599.0H754.7V596.4H756.8V593.7H758.8V591.0H760.9V588.4H762.9V585.8H764.9V583.1H767.0V580.5H769.0V577.8H771.1V575.1H773.1V572.5H775.1V569.9H777.2V567.2H779.2V564.5H781.3V561.9H783.3V559.2H785.3V556.6H787.4V554.0H789.4V551.3H791.5V548.6H793.5V546.0M795.5 574.0H797.5V569.6H799.5V567.4H801.5V564.0H803.5V560.7H805.5V557.4H807.5V554.1H809.5V550.8H811.5V547.4H813.5V544.1H815.5V540.8H817.6V537.5H819.6V534.2H821.6V530.8H823.6V527.5H825.6V524.2H827.6V520.9H829.6V517.6H831.6V514.2H833.6V510.9H835.6V507.6M837.6 534.5H839.7V530.9H841.8V527.3H843.8V523.7H845.9V520.1H848.0V516.5H850.1V512.9H852.1V509.3H854.2V505.7H856.3V502.1H858.4V498.5H860.4V494.9H862.5V491.3H864.6V487.7H866.7V484.1H868.7V480.5H870.8V476.9H872.9V473.3M874.9 504.0H876.9V498.1H878.9V496.4H880.9V492.7H882.9V488.9H884.9V485.1H886.9V481.3H888.9V477.5H890.9V473.7H893.0V470.0H895.0V466.2H897.0V462.4H899.0V458.6H901.0V454.8H903.0V451.0H905.0V447.3H907.0V443.5H909.0V439.7M911.0 472.0H913.0V466.3H915.1V463.9H917.1V460.1H919.1V456.1H921.2V452.2H923.2V448.2H925.2V444.2H927.3V440.3H929.3V436.3H931.4V432.4H933.4V428.4H935.4V424.4H937.5V420.5H939.5V416.5H941.5V412.5H943.6V408.6H945.6V404.6M947.6 435.0H949.7V424.0H951.8V421.8H953.8V419.6H955.9V417.5H958.0V415.3H960.0V412.5H962.1V408.8H964.2V405.0H966.3V401.2H968.4V397.5H970.4V393.8H972.5V390.0H974.6V386.2H976.6V382.5H978.7V378.8H980.8V375.0M982.8 394.0H984.9V386.9H987.0V384.6H989.0V382.2H991.1V379.9H993.2V377.6H995.3V375.3H997.4V372.6H999.5V369.6H1001.5V366.5H1003.6V363.4H1005.7V360.4H1007.8V357.3H1009.9V354.3H1012.0V351.2H1014.0V348.2H1016.1V345.1H1018.2V342.1H1020.3V339.0M1022.3 363.0H1024.3V351.9H1026.3V350.0H1028.3V348.1H1030.3V346.2H1032.3V344.3H1034.3V342.0H1036.3V338.5H1038.3V335.0H1040.3V331.5H1042.3V328.0H1044.3V324.5H1046.3V321.0H1048.3V317.5H1050.3V314.0H1052.3V310.5H1054.3V307.0M1056.3 324.0H1058.3V319.8H1060.4V316.6H1062.4V312.9H1064.5V309.1H1066.5V305.4H1068.6V301.7H1070.6V298.0H1072.7V294.3H1074.7V290.6H1076.8V286.8H1078.8V283.1H1080.9V279.4H1082.9V275.7M1084.9 297.6H1087.0V292.3H1089.2V289.7H1091.3V285.7H1093.4V281.7H1095.5V277.8H1097.7V273.8H1099.8V269.8H1101.9V265.9H1104.0V261.9H1106.2V257.9H1108.3V254.0H1110.4V250.0M1112.4 268.0H1114.5V263.9H1116.6V259.8H1118.7V255.7H1120.8V251.6H1122.9V247.5H1125.0V243.4H1127.2V239.3H1129.3V235.2H1131.4V231.1H1133.5V227.0H1135.6V222.9H1137.7V218.8H1139.8V214.7M1141.8 245.5H1143.8V236.2H1145.8V234.2H1147.9V232.1H1149.9V230.1H1151.9V228.3H1153.9V225.3H1156.0V222.0H1158.0V218.6H1160.0V215.2H1162.0V211.9H1164.0V208.5H1166.1V205.2H1168.1V201.8H1170.1V198.4H1172.1V195.1H1174.2V191.7H1176.2V188.4H1178.2V185.0M1180.2 204.0H1182.2V201.2H1184.3V198.4H1186.3V195.6H1188.4V192.8H1190.4V190.0H1192.4V187.1H1194.5V184.3H1196.5V181.5H1198.5V178.7H1200.6V175.9H1202.6V173.1H1204.7V170.3H1206.7V167.5H1208.7V164.7H1210.8V161.9H1212.8V159.0H1214.8V156.2H1216.9V153.4H1218.9V150.6H1221.0V147.8H1223.0V145.0M1225.0 168.0H1227.0V162.1H1229.0V160.3H1231.0V158.5H1233.0V156.7H1235.0V154.9H1237.0V153.0H1239.0V151.2H1241.0V149.3H1243.0V147.0H1245.0V144.7H1247.0V142.3H1249.0V140.0H1251.0V137.7H1253.0V135.4H1255.0V133.0H1257.0V130.7H1259.0V128.4H1261.0V126.0H1263.0V123.7H1265.0V121.4H1267.0V119.0H1269.0V116.7M1271.0 129.0H1273.0V121.1H1275.0V119.5H1277.0V117.9H1279.0V116.4H1281.0V114.8H1283.0V113.2H1285.0V110.7H1287.0V108.1H1289.0V105.5H1291.0V102.9H1293.0V100.3H1295.0V97.7H1297.0V95.1H1299.0V92.5H1301.0V89.8H1303.0V87.2H1305.0V84.6H1307.0V82.0H1309.0V79.4H1311.0V76.8M1313.0 92.5H1315.0V87.5H1317.0V85.7H1319.0V83.9H1321.0V81.3H1323.0V78.6H1325.0V75.8H1327.0V73.0H1329.0V70.2H1331.0V67.4H1333.0V64.6H1335.0V61.8H1337.0V59.0H1339.0V56.2H1341.0V53.5H1343.0V50.7H1345.0V47.9H1347.0V45.1H1349.0V42.3H1351.0V39.5H1353.0V36.7H1355.0V33.9H1357.0V31.2H1359.0V28.4H1361.0V25.6H1363.0V22.8H1365.0V20.0" fill="none" stroke="#000" stroke-width="3" stroke-linejoin="miter"/>
<path d="M593.2 684.0L594.7 705.0M654.3 644.5L655.8 660.0M707.1 615.5L708.6 634.0M751.2 580.3L752.7 599.0M794.0 546.0L795.5 574.0M836.1 507.6L837.6 534.5M873.4 473.3L874.9 504.0M909.5 439.7L911.0 472.0M946.1 404.6L947.6 435.0M981.3 375.0L982.8 394.0M1020.8 339.0L1022.3 363.0M1054.8 307.0L1056.3 324.0M1083.4 275.7L1084.9 297.6M1110.9 250.0L1112.4 268.0M1140.3 214.7L1141.8 245.5M1178.7 185.0L1180.2 204.0M1223.5 145.0L1225.0 168.0M1269.5 116.7L1271.0 129.0M1311.5 76.8L1313.0 92.5M1365.5 20.0L1367.0 40.0" fill="none" stroke="#000" stroke-width="1.3"/>
</g>
<line x1="875.5" y1="55" x2="875.5" y2="705" stroke="#000" stroke-width="1" />
<line x1="541" y1="505.5" x2="1393" y2="505.5" stroke="#000" stroke-width="1" />
<rect x="539" y="53" width="2" height="653" fill="#000" />
<rect x="539" y="53" width="856" height="2" fill="#000" />
<rect x="1393" y="53" width="2" height="653" fill="#000" />
<rect x="539" y="704" width="856" height="2" fill="#000" />
<path d="M531.5 388 L539.5 392.3 L531.5 396.6 Z" fill="#000"/>
<text x="546.3" y="395.6" font-size="9.6" fill="#000" text-anchor="start" textLength="22.4" lengthAdjust="spacingAndGlyphs" >0.783</text>
<path d="M541 706 L547.5 706 L541 714 Z" fill="#000"/>
<text x="549.2" y="713.3" font-size="9.6" fill="#000" text-anchor="start" textLength="22.5" lengthAdjust="spacingAndGlyphs" >0.659</text>
<path d="M1387.5 53 L1392.5 44 L1397.5 53 Z" fill="#000"/>
<text x="1361" y="52" font-size="9.6" fill="#000" text-anchor="start" textLength="23.5" lengthAdjust="spacingAndGlyphs" >0.921</text>
<line x1="531" y1="733.5" x2="540" y2="733.5" stroke="#a8a8a8" stroke-width="1" />
<text x="525.5" y="738.1" font-size="12.3" fill="#46cc64" text-anchor="end">10.0</text>
<line x1="536" y1="737.5" x2="540" y2="737.5" stroke="#c0c0c0" stroke-width="1" />
<line x1="536" y1="741.5" x2="540" y2="741.5" stroke="#c0c0c0" stroke-width="1" />
<line x1="536" y1="744.5" x2="540" y2="744.5" stroke="#c0c0c0" stroke-width="1" />
<line x1="536" y1="748.5" x2="540" y2="748.5" stroke="#c0c0c0" stroke-width="1" />
<line x1="531" y1="752.5" x2="540" y2="752.5" stroke="#a8a8a8" stroke-width="1" />
<text x="525.5" y="756.9" font-size="12.3" fill="#46cc64" text-anchor="end">7.5</text>
<line x1="536" y1="756.5" x2="540" y2="756.5" stroke="#c0c0c0" stroke-width="1" />
<line x1="536" y1="759.5" x2="540" y2="759.5" stroke="#c0c0c0" stroke-width="1" />
<line x1="536" y1="763.5" x2="540" y2="763.5" stroke="#c0c0c0" stroke-width="1" />
<line x1="536" y1="767.5" x2="540" y2="767.5" stroke="#c0c0c0" stroke-width="1" />
<line x1="531" y1="771.5" x2="540" y2="771.5" stroke="#a8a8a8" stroke-width="1" />
<text x="525.5" y="775.6" font-size="12.3" fill="#46cc64" text-anchor="end">5.0</text>
<line x1="536" y1="774.5" x2="540" y2="774.5" stroke="#c0c0c0" stroke-width="1" />
<line x1="536" y1="778.5" x2="540" y2="778.5" stroke="#c0c0c0" stroke-width="1" />
<line x1="536" y1="782.5" x2="540" y2="782.5" stroke="#c0c0c0" stroke-width="1" />
<line x1="536" y1="786.5" x2="540" y2="786.5" stroke="#c0c0c0" stroke-width="1" />
<line x1="531" y1="789.5" x2="540" y2="789.5" stroke="#a8a8a8" stroke-width="1" />
<text x="525.5" y="794.4" font-size="12.3" fill="#46cc64" text-anchor="end">2.5</text>
<line x1="536" y1="793.5" x2="540" y2="793.5" stroke="#c0c0c0" stroke-width="1" />
<line x1="536" y1="797.5" x2="540" y2="797.5" stroke="#c0c0c0" stroke-width="1" />
<line x1="536" y1="801.5" x2="540" y2="801.5" stroke="#c0c0c0" stroke-width="1" />
<line x1="536" y1="804.5" x2="540" y2="804.5" stroke="#c0c0c0" stroke-width="1" />
<line x1="531" y1="808.5" x2="540" y2="808.5" stroke="#a8a8a8" stroke-width="1" />
<text x="525.5" y="813.1" font-size="12.3" fill="#46cc64" text-anchor="end">0.0</text>
<line x1="536" y1="812.5" x2="540" y2="812.5" stroke="#c0c0c0" stroke-width="1" />
<line x1="536" y1="816.5" x2="540" y2="816.5" stroke="#c0c0c0" stroke-width="1" />
<line x1="536" y1="819.5" x2="540" y2="819.5" stroke="#c0c0c0" stroke-width="1" />
<line x1="536" y1="823.5" x2="540" y2="823.5" stroke="#c0c0c0" stroke-width="1" />
<line x1="531" y1="827.5" x2="540" y2="827.5" stroke="#a8a8a8" stroke-width="1" />
<text x="525.5" y="831.9" font-size="12.3" fill="#46cc64" text-anchor="end">-2.5</text>
<line x1="536" y1="831.5" x2="540" y2="831.5" stroke="#c0c0c0" stroke-width="1" />
<line x1="536" y1="834.5" x2="540" y2="834.5" stroke="#c0c0c0" stroke-width="1" />
<line x1="536" y1="838.5" x2="540" y2="838.5" stroke="#c0c0c0" stroke-width="1" />
<line x1="536" y1="842.5" x2="540" y2="842.5" stroke="#c0c0c0" stroke-width="1" />
<line x1="531" y1="846.5" x2="540" y2="846.5" stroke="#a8a8a8" stroke-width="1" />
<text x="525.5" y="850.6" font-size="12.3" fill="#46cc64" text-anchor="end">-5.0</text>
<line x1="536" y1="849.5" x2="540" y2="849.5" stroke="#c0c0c0" stroke-width="1" />
<line x1="536" y1="853.5" x2="540" y2="853.5" stroke="#c0c0c0" stroke-width="1" />
<line x1="536" y1="857.5" x2="540" y2="857.5" stroke="#c0c0c0" stroke-width="1" />
<line x1="536" y1="861.5" x2="540" y2="861.5" stroke="#c0c0c0" stroke-width="1" />
<line x1="531" y1="864.5" x2="540" y2="864.5" stroke="#a8a8a8" stroke-width="1" />
<text x="525.5" y="869.4" font-size="12.3" fill="#46cc64" text-anchor="end">-7.5</text>
<line x1="536" y1="868.5" x2="540" y2="868.5" stroke="#c0c0c0" stroke-width="1" />
<line x1="536" y1="872.5" x2="540" y2="872.5" stroke="#c0c0c0" stroke-width="1" />
<line x1="536" y1="876.5" x2="540" y2="876.5" stroke="#c0c0c0" stroke-width="1" />
<line x1="536" y1="879.5" x2="540" y2="879.5" stroke="#c0c0c0" stroke-width="1" />
<line x1="531" y1="883.5" x2="540" y2="883.5" stroke="#a8a8a8" stroke-width="1" />
<text x="525.5" y="888.1" font-size="12.3" fill="#46cc64" text-anchor="end">-10.0</text>
<text x="0" y="0" font-size="12" fill="#46cc64" text-anchor="middle" transform="translate(485,809) rotate(-90)" textLength="55" lengthAdjust="spacingAndGlyphs">LamLabOK</text>
<clipPath id="bclip"><rect x="541" y="732" width="852" height="152"/></clipPath>
<g clip-path="url(#bclip)">
<line x1="541" y1="862.5" x2="1393" y2="862.5" stroke="#d05070" stroke-width="1" />
<path d="M541.0 876.5H561.0V876.5H601.0V876.5H641.0V876.5H681.0V877.5H741.0V877.5H801.0V877.5H811.0V876.5H871.0V876.5H891.0V876.5H911.0V876.5H921.0V876.5H961.0V876.5H971.0V876.5H1031.0V876.5H1041.0V877.5H1071.0V877.5H1081.0V876.5H1091.0V876.5H1151.0V876.5H1191.0V876.5H1211.0V876.5H1251.0V877.5H1271.0V877.5H1291.0V876.5H1351.0V877.5H1361.0V876.5H1393" fill="none" stroke="#20a8b0" stroke-width="1.4"/>
<line x1="541" y1="881" x2="1393" y2="881" stroke="#106010" stroke-width="2.5" />
<line x1="541" y1="796.5" x2="1076" y2="796.5" stroke="#28a828" stroke-width="1.2" />
<line x1="1076" y1="796" x2="1393" y2="796" stroke="#28a828" stroke-width="2" />
<path d="M871.5 796v-2M831.5 796v-2M665.5 796v-2M997.5 796v-2M789.5 796v-2M1354.5 796v-2M968.5 796v-2M811.5 796v-2M953.5 796v-2M767.5 796v-2M1251.5 796v-2M676.5 796v-2M1151.5 796v-2M1377.5 796v-2M543.5 796v-2M600.5 796v-2M1051.5 796v-2M985.5 796v-2M1027.5 796v-2M812.5 796v-2M1375.5 796v-2M637.5 796v-2M1111.5 796v-2M1074.5 796v-2M1251.5 796v-2M824.5 796v-2M1190.5 796v-2M1333.5 796v-2M750.5 796v-2M684.5 796v-2M1327.5 796v-2M689.5 796v-2M906.5 796v-2M677.5 796v-2M572.5 796v-2M983.5 796v-2M1101.5 796v-2M746.5 796v-2M1322.5 796v-2M679.5 796v-2M1173.5 796v-2M553.5 796v-2M836.5 796v-2M972.5 796v-2M1109.5 796v-2" stroke="#28a828" stroke-width="1"/>
<path d="M541.0 814.5H543.0V812.5H545.0V813.5H547.0V812.5H549.0V812.5H551.0V813.5H553.0V811.5H555.0V812.5H557.0V813.5H559.0V813.5H561.0V811.5H563.0V811.5H565.0V812.5H567.0V813.5H569.0V813.5H571.0V811.5H573.0V811.5H575.0V813.5H577.0V811.5H579.0V811.5H581.0V813.5H583.0V813.5H585.0V812.5H587.0V813.5H589.0V813.5H591.0V812.5H593.0V811.5H595.0V812.5H597.0V813.5H599.0V812.5H601.0V813.5H603.0V812.5H605.0V811.5H607.0V812.5H609.0V811.5H611.0V812.5H613.0V811.5H615.0V811.5H617.0V812.5H619.0V811.5H621.0V811.5H623.0V811.5H625.0V813.5H627.0V811.5H629.0V812.5H631.0V812.5H633.0V813.5H635.0V810.5H637.0V810.5H639.0V811.5H641.0V810.5H643.0V812.5H645.0V812.5H647.0V810.5H649.0V810.5H651.0V811.5H653.0V811.5H655.0V813.5H657.0V811.5H659.0V812.5H661.0V811.5H663.0V810.5H665.0V812.5H667.0V810.5H669.0V812.5H671.0V812.5H673.0V811.5H675.0V811.5H677.0V812.5H679.0V809.5H681.0V812.5H683.0V810.5H685.0V812.5H687.0V810.5H689.0V811.5H691.0V812.5H693.0V810.5H695.0V812.5H697.0V811.5H699.0V811.5H701.0V810.5H703.0V809.5H705.0V811.5H707.0V812.5H709.0V811.5H711.0V811.5H713.0V810.5H715.0V810.5H717.0V810.5H719.0V809.5H721.0V810.5H723.0V809.5H725.0V810.5H727.0V809.5H729.0V810.5H731.0V811.5H733.0V809.5H735.0V810.5H737.0V809.5H739.0V809.5H741.0V808.5H743.0V810.5H745.0V809.5H747.0V811.5H749.0V810.5H751.0V810.5H753.0V810.5H755.0V811.5H757.0V809.5H759.0V811.5H761.0V810.5H763.0V810.5H765.0V809.5H767.0V809.5H769.0V810.5H771.0V807.5H773.0V807.5H775.0V809.5H777.0V807.5H779.0V808.5H781.0V809.5H783.0V808.5H785.0V808.5H787.0V809.5H789.0V808.5H791.0V808.5H793.0V807.5H795.0V809.5H797.0V808.5H799.0V806.5H801.0V807.5H803.0V807.5H805.0V808.5H807.0V807.5H809.0V807.5H811.0V808.5H813.0V808.5H815.0V808.5H817.0V808.5H819.0V808.5H821.0V806.5H823.0V807.5H825.0V807.5H827.0V806.5H829.0V807.5H831.0V807.5H833.0V808.5H835.0V808.5H837.0V806.5H839.0V806.5H841.0V808.5H843.0V807.5H845.0V805.5H847.0V805.5H849.0V806.5H851.0V807.5H853.0V806.5H855.0V807.5H857.0V808.5H859.0V808.5H861.0V805.5H863.0V806.5H865.0V806.5H867.0V805.5H869.0V806.5H871.0V805.5H873.0V804.5H875.0V804.5H877.0V805.5H879.0V807.5H881.0V807.5H883.0V806.5H885.0V805.5H887.0V804.5H889.0V805.5H891.0V805.5H893.0V804.5H895.0V804.5H897.0V804.5H899.0V804.5H901.0V805.5H903.0V805.5H905.0V805.5H907.0V804.5H909.0V803.5H911.0V805.5H913.0V803.5H915.0V803.5H917.0V804.5H919.0V805.5H921.0V803.5H923.0V802.5H925.0V804.5H927.0V803.5H929.0V803.5H931.0V803.5H933.0V804.5H935.0V804.5H937.0V802.5H939.0V804.5H941.0V802.5H943.0V802.5H945.0V801.5H947.0V801.5H949.0V802.5H951.0V803.5H953.0V802.5H955.0V803.5H957.0V801.5H959.0V801.5H961.0V803.5H963.0V801.5H965.0V802.5H967.0V802.5H969.0V802.5H971.0V801.5H973.0V802.5H975.0V802.5H977.0V800.5H979.0V801.5H981.0V802.5H983.0V803.5H985.0V801.5H987.0V800.5H989.0V801.5H991.0V801.5H993.0V801.5H995.0V801.5H997.0V801.5H999.0V801.5H1001.0V800.5H1003.0V800.5H1005.0V800.5H1007.0V801.5H1009.0V799.5H1011.0V802.5H1013.0V801.5H1015.0V800.5H1017.0V800.5H1019.0V802.5H1021.0V800.5H1023.0V800.5H1025.0V800.5H1027.0V801.5H1029.0V800.5H1031.0V802.5H1033.0V800.5H1035.0V799.5H1037.0V800.5H1039.0V800.5H1041.0V800.5H1043.0V800.5H1045.0V800.5H1047.0V802.5H1049.0V800.5H1051.0V800.5H1053.0V800.5H1055.0V801.5H1057.0V801.5H1059.0V801.5H1061.0V801.5H1063.0V801.5H1065.0V799.5H1067.0V800.5H1069.0V801.5H1071.0V802.5H1073.0V800.5H1075.0V799.5H1077.0V800.5H1079.0V799.5H1081.0V801.5H1083.0V801.5H1085.0V801.5H1087.0V801.5H1089.0V799.5H1091.0V800.5H1093.0V800.5H1095.0V800.5H1097.0V801.5H1099.0V800.5H1101.0V802.5H1103.0V799.5H1105.0V800.5H1107.0V799.5H1109.0V800.5H1111.0V801.5H1113.0V800.5H1115.0V802.5H1117.0V801.5H1119.0V801.5H1121.0V800.5H1123.0V801.5H1125.0V800.5H1127.0V801.5H1129.0V802.5H1131.0V802.5H1133.0V802.5H1135.0V800.5H1137.0V801.5H1139.0V801.5H1141.0V802.5H1143.0V802.5H1145.0V801.5H1147.0V803.5H1149.0V803.5H1151.0V803.5H1153.0V802.5H1155.0V803.5H1157.0V802.5H1159.0V802.5H1161.0V800.5H1163.0V802.5H1165.0V801.5H1167.0V803.5H1169.0V801.5H1171.0V800.5H1173.0V802.5H1175.0V802.5H1177.0V802.5H1179.0V802.5H1181.0V801.5H1183.0V801.5H1185.0V801.5H1187.0V803.5H1189.0V801.5H1191.0V802.5H1193.0V800.5H1195.0V803.5H1197.0V801.5H1199.0V803.5H1201.0V802.5H1203.0V802.5H1205.0V802.5H1207.0V802.5H1209.0V802.5H1211.0V802.5H1213.0V802.5H1215.0V802.5H1217.0V804.5H1219.0V805.5H1221.0V803.5H1223.0V805.5H1225.0V804.5H1227.0V804.5H1229.0V806.5H1231.0V805.5H1233.0V806.5H1235.0V806.5H1237.0V804.5H1239.0V807.5H1241.0V805.5H1243.0V806.5H1245.0V806.5H1247.0V807.5H1249.0V806.5H1251.0V808.5H1253.0V806.5H1255.0V806.5H1257.0V806.5H1259.0V808.5H1261.0V808.5H1263.0V808.5H1265.0V807.5H1267.0V810.5H1269.0V809.5H1271.0V808.5H1273.0V810.5H1275.0V810.5H1277.0V808.5H1279.0V808.5H1281.0V810.5H1283.0V811.5H1285.0V808.5H1287.0V810.5H1289.0V810.5H1291.0V810.5H1293.0V809.5H1295.0V811.5H1297.0V810.5H1299.0V809.5H1301.0V812.5H1303.0V812.5H1305.0V811.5H1307.0V809.5H1309.0V812.5H1311.0V811.5H1313.0V811.5H1315.0V813.5H1317.0V810.5H1319.0V813.5H1321.0V812.5H1323.0V812.5H1325.0V814.5H1327.0V812.5H1329.0V813.5H1331.0V813.5H1333.0V813.5H1335.0V813.5H1337.0V813.5H1339.0V812.5H1341.0V815.5H1343.0V813.5H1345.0V814.5H1347.0V814.5H1349.0V815.5H1351.0V815.5H1353.0V815.5H1355.0V814.5H1357.0V814.5H1359.0V816.5H1361.0V816.5H1363.0V816.5H1365.0V816.5H1367.0V817.5H1369.0V816.5H1371.0V815.5H1373.0V815.5H1375.0V815.5H1377.0V816.5H1379.0V817.5H1381.0V816.5H1383.0V818.5H1385.0V817.5H1387.0V816.5H1389.0V816.5H1391.0V816.5H1393.0V816.5" fill="none" stroke="#7c7c7c" stroke-width="2.2"/>
<path d="M541.0 801.5H549.0V801.5H557.0V801.5H565.0V801.5H573.0V801.5H581.0V801.5H589.0V801.5H597.0V801.5H605.0V800.5H613.0V801.5H621.0V801.5H629.0V801.5H637.0V801.5H645.0V801.5H653.0V801.5H661.0V801.5H669.0V801.5H677.0V801.5H685.0V801.5H693.0V801.5H701.0V801.5H709.0V801.5H717.0V801.5H725.0V801.5H733.0V801.5H741.0V800.5H749.0V801.5H757.0V801.5H765.0V801.5H773.0V800.5H781.0V801.5H789.0V801.5H797.0V800.5H805.0V801.5H813.0V800.5H821.0V801.5H829.0V800.5H837.0V801.5H845.0V801.5H853.0V800.5H861.0V801.5H869.0V800.5H877.0V800.5H885.0V801.5H893.0V801.5H901.0V801.5H909.0V800.5H917.0V801.5H925.0V800.5H933.0V800.5H941.0V800.5H949.0V801.5H957.0V801.5H965.0V800.5H973.0V801.5H981.0V801.5H989.0V800.5H997.0V800.5H1005.0V801.5H1013.0V800.5H1021.0V801.5H1029.0V801.5H1037.0V800.5H1045.0V801.5H1053.0V801.5H1061.0V800.5H1069.0V801.5H1077.0V800.5H1085.0V800.5H1093.0V800.5H1101.0V800.5H1109.0V800.5H1117.0V801.5H1125.0V800.5H1133.0V801.5H1141.0V801.5H1149.0V801.5H1157.0V800.5H1165.0V800.5H1173.0V801.5H1181.0V800.5H1189.0V800.5H1197.0V801.5H1205.0V800.5H1213.0V800.5H1221.0V800.5H1229.0V800.5H1237.0V801.5H1245.0V800.5H1253.0V800.5H1261.0V800.5H1269.0V800.5H1277.0V800.5H1285.0V800.5H1293.0V800.5H1301.0V800.5H1309.0V800.5H1317.0V800.5H1325.0V800.5H1333.0V800.5H1341.0V800.5H1349.0V800.5H1357.0V800.5H1365.0V800.5H1373.0V800.5H1381.0V800.5H1389.0V800.5H1394" fill="none" stroke="#0a10b8" stroke-width="1.3"/>
<line x1="1031" y1="800.5" x2="1393" y2="800.5" stroke="#0a10b8" stroke-width="2" />
<path d="M737 800.5h3M1284 800.5h3M1243 800.5h3M966 800.5h8M1108 800.5h3M1367 800.5h8M1310 800.5h5M1107 800.5h5M1197 800.5h8M870 800.5h3M1149 800.5h3M682 800.5h3M1191 800.5h3M604 800.5h5M636 800.5h8M1038 800.5h8M921 800.5h8M789 800.5h5M1351 800.5h8M640 800.5h5M546 800.5h5M1252 800.5h5M936 800.5h5M1292 800.5h5M1262 800.5h3M992 800.5h8M1339 800.5h5M716 800.5h3M1238 800.5h5M1218 800.5h3M544 800.5h5M578 800.5h5M1132 800.5h8M563 800.5h3M689 800.5h8M1123 800.5h3M1265 800.5h5M1071 800.5h3M1058 800.5h3M624 800.5h8M804 800.5h5M819 800.5h8M878 800.5h5M1177 800.5h8M576 800.5h5M815 800.5h5M1241 800.5h3M1390 800.5h3M1067 800.5h5M934 800.5h8M1336 800.5h3M700 800.5h8M914 800.5h3M1291 800.5h5M613 800.5h8M1014 800.5h3M1237 800.5h3M1066 800.5h3M1157 800.5h3M1383 800.5h8" stroke="#0a10b8" stroke-width="1"/>
<path d="M541.0 808.5H543.0V810.5H545.0V810.5H547.0V808.5H549.0V811.5H551.0V811.5H553.0V809.5H555.0V810.5H557.0V809.5H559.0V810.5H561.0V809.5H563.0V809.5H565.0V810.5H567.0V808.5H569.0V809.5H571.0V810.5H573.0V809.5H575.0V808.5H577.0V811.5H579.0V808.5H581.0V809.5H583.0V809.5H585.0V809.5H587.0V809.5H589.0V810.5H591.0V808.5H593.0V810.5H595.0V808.5H597.0V808.5H599.0V808.5H601.0V809.5H603.0V809.5H605.0V809.5H607.0V811.5H609.0V810.5H611.0V809.5H613.0V810.5H615.0V810.5H617.0V809.5H619.0V810.5H621.0V810.5H623.0V810.5H625.0V810.5H627.0V810.5H629.0V811.5H631.0V809.5H633.0V810.5H635.0V811.5H637.0V810.5H639.0V811.5H641.0V808.5H643.0V810.5H645.0V809.5H647.0V810.5H649.0V809.5H651.0V809.5H653.0V808.5H655.0V808.5H657.0V811.5H659.0V810.5H661.0V810.5H663.0V808.5H665.0V808.5H667.0V811.5H669.0V808.5H671.0V809.5H673.0V810.5H675.0V809.5H677.0V809.5H679.0V811.5H681.0V810.5H683.0V808.5H685.0V809.5H687.0V809.5H689.0V809.5H691.0V809.5H693.0V808.5H695.0V809.5H697.0V808.5H699.0V807.5H701.0V808.5H703.0V808.5H705.0V807.5H707.0V809.5H709.0V810.5H711.0V810.5H713.0V809.5H715.0V810.5H717.0V808.5H719.0V809.5H721.0V810.5H723.0V807.5H725.0V808.5H727.0V808.5H729.0V808.5H731.0V808.5H733.0V807.5H735.0V809.5H737.0V810.5H739.0V807.5H741.0V807.5H743.0V807.5H745.0V809.5H747.0V807.5H749.0V809.5H751.0V807.5H753.0V808.5H755.0V809.5H757.0V809.5H759.0V806.5H761.0V810.5H763.0V809.5H765.0V808.5H767.0V809.5H769.0V808.5H771.0V807.5H773.0V807.5H775.0V809.5H777.0V808.5H779.0V806.5H781.0V806.5H783.0V806.5H785.0V808.5H787.0V808.5H789.0V807.5H791.0V807.5H793.0V809.5H795.0V807.5H797.0V808.5H799.0V806.5H801.0V807.5H803.0V806.5H805.0V806.5H807.0V807.5H809.0V806.5H811.0V807.5H813.0V808.5H815.0V807.5H817.0V808.5H819.0V807.5H821.0V806.5H823.0V808.5H825.0V807.5H827.0V808.5H829.0V809.5H831.0V807.5H833.0V806.5H835.0V806.5H837.0V807.5H839.0V806.5H841.0V805.5H843.0V807.5H845.0V807.5H847.0V808.5H849.0V808.5H851.0V808.5H853.0V808.5H855.0V806.5H857.0V807.5H859.0V805.5H861.0V808.5H863.0V807.5H865.0V806.5H867.0V806.5H869.0V806.5H871.0V808.5H873.0V806.5H875.0V808.5H877.0V808.5H879.0V807.5H881.0V806.5H883.0V806.5H885.0V808.5H887.0V808.5H889.0V805.5H891.0V806.5H893.0V807.5H895.0V807.5H897.0V805.5H899.0V806.5H901.0V808.5H903.0V804.5H905.0V805.5H907.0V806.5H909.0V807.5H911.0V807.5H913.0V806.5H915.0V807.5H917.0V807.5H919.0V805.5H921.0V805.5H923.0V805.5H925.0V807.5H927.0V804.5H929.0V806.5H931.0V807.5H933.0V804.5H935.0V806.5H937.0V805.5H939.0V807.5H941.0V805.5H943.0V805.5H945.0V807.5H947.0V806.5H949.0V804.5H951.0V806.5H953.0V805.5H955.0V807.5H957.0V807.5H959.0V805.5H961.0V804.5H963.0V804.5H965.0V804.5H967.0V804.5H969.0V803.5H971.0V805.5H973.0V803.5H975.0V805.5H977.0V805.5H979.0V805.5H981.0V805.5H983.0V806.5H985.0V804.5H987.0V803.5H989.0V805.5H991.0V803.5H993.0V806.5H995.0V806.5H997.0V805.5H999.0V805.5H1001.0V803.5H1003.0V804.5H1005.0V804.5H1007.0V804.5H1009.0V804.5H1011.0V804.5H1013.0V805.5H1015.0V802.5H1017.0V804.5H1019.0V803.5H1021.0V806.5H1023.0V804.5H1025.0V804.5H1027.0V803.5H1029.0V805.5H1031.0V805.5H1033.0V805.5H1035.0V804.5H1037.0V803.5H1039.0V804.5H1041.0V802.5H1043.0V805.5H1045.0V803.5H1047.0V804.5H1049.0V802.5H1051.0V804.5H1053.0V802.5H1055.0V802.5H1057.0V803.5H1059.0V805.5H1061.0V803.5H1063.0V804.5H1065.0V804.5H1067.0V805.5H1069.0V803.5H1071.0V804.5H1073.0V804.5H1075.0V804.5H1077.0V803.5H1079.0V803.5H1081.0V804.5H1083.0V802.5H1085.0V803.5H1087.0V804.5H1089.0V804.5H1091.0V802.5H1093.0V804.5H1095.0V802.5H1097.0V802.5H1099.0V803.5H1101.0V804.5H1103.0V803.5H1105.0V805.5H1107.0V802.5H1109.0V803.5H1111.0V803.5H1113.0V802.5H1115.0V804.5H1117.0V802.5H1119.0V802.5H1121.0V801.5H1123.0V803.5H1125.0V803.5H1127.0V802.5H1129.0V804.5H1131.0V803.5H1133.0V802.5H1135.0V804.5H1137.0V804.5H1139.0V802.5H1141.0V804.5H1143.0V801.5H1145.0V802.5H1147.0V802.5H1149.0V804.5H1151.0V802.5H1153.0V802.5H1155.0V802.5H1157.0V804.5H1159.0V802.5H1161.0V804.5H1163.0V803.5H1165.0V803.5H1167.0V805.5H1169.0V803.5H1171.0V804.5H1173.0V804.5H1175.0V804.5H1177.0V803.5H1179.0V804.5H1181.0V803.5H1183.0V803.5H1185.0V802.5H1187.0V804.5H1189.0V804.5H1191.0V805.5H1193.0V803.5H1195.0V805.5H1197.0V804.5H1199.0V805.5H1201.0V806.5H1203.0V805.5H1205.0V805.5H1207.0V806.5H1209.0V804.5H1211.0V807.5H1213.0V806.5H1215.0V804.5H1217.0V806.5H1219.0V808.5H1221.0V808.5H1223.0V807.5H1225.0V806.5H1227.0V809.5H1229.0V807.5H1231.0V806.5H1233.0V807.5H1235.0V808.5H1237.0V809.5H1239.0V807.5H1241.0V808.5H1243.0V810.5H1245.0V809.5H1247.0V808.5H1249.0V810.5H1251.0V809.5H1253.0V811.5H1255.0V810.5H1257.0V811.5H1259.0V811.5H1261.0V812.5H1263.0V812.5H1265.0V812.5H1267.0V811.5H1269.0V812.5H1271.0V811.5H1273.0V810.5H1275.0V813.5H1277.0V813.5H1279.0V813.5H1281.0V813.5H1283.0V812.5H1285.0V814.5H1287.0V812.5H1289.0V814.5" fill="none" stroke="#22dd44" stroke-width="1.9"/>
<path d="M880.0 804.5H882.0V805.5H884.0V805.5H886.0V806.5H888.0V805.5H890.0V806.5H892.0V804.5H894.0V805.5H896.0V805.5H898.0V805.5H900.0V803.5H902.0V805.5H904.0V803.5H906.0V804.5H908.0V803.5H910.0V805.5H912.0V803.5H914.0V804.5H916.0V802.5H918.0V803.5H920.0V804.5H922.0V805.5H924.0V802.5H926.0V804.5H928.0V803.5H930.0V803.5H932.0V802.5H934.0V801.5H936.0V801.5H938.0V804.5H940.0V803.5H942.0V803.5H944.0V801.5H946.0V803.5H948.0V803.5H950.0V801.5H952.0V803.5H954.0V803.5H956.0V803.5H958.0V802.5H960.0V802.5H962.0V801.5H964.0V802.5H966.0V801.5H968.0V802.5H970.0V802.5H972.0V803.5H974.0V802.5H976.0V800.5H978.0V800.5H980.0V801.5H982.0V801.5H984.0V802.5H986.0V800.5H988.0V801.5H990.0V801.5H992.0V800.5H994.0V801.5H996.0V801.5H998.0V802.5H1000.0V800.5H1002.0V802.5H1004.0V801.5H1006.0V801.5H1008.0V800.5H1010.0V801.5H1012.0V802.5H1014.0V800.5H1016.0V801.5H1018.0V801.5H1020.0V800.5H1022.0V802.5H1024.0V800.5H1026.0V801.5H1028.0V802.5H1030.0V802.5H1032.0V802.5H1034.0V800.5H1036.0V802.5H1038.0V800.5H1040.0V801.5H1042.0V801.5H1044.0V802.5H1046.0V801.5H1048.0V801.5H1050.0V802.5H1052.0V800.5H1054.0V801.5H1056.0V799.5H1058.0V800.5H1060.0V800.5H1062.0V801.5H1064.0V800.5H1066.0V802.5H1068.0V801.5H1070.0V800.5H1072.0V799.5H1074.0V800.5H1076.0V801.5H1078.0V800.5H1080.0V802.5H1082.0V800.5H1084.0V800.5H1086.0V800.5H1088.0V800.5H1090.0V800.5H1092.0V802.5H1094.0V799.5H1096.0V800.5H1098.0V801.5H1100.0V800.5H1102.0V800.5H1104.0V801.5H1106.0V799.5H1108.0V800.5H1110.0V800.5H1112.0V801.5H1114.0V801.5H1116.0V800.5H1118.0V801.5H1120.0V800.5H1122.0V801.5H1124.0V800.5H1126.0V801.5H1128.0V801.5H1130.0V801.5H1132.0V802.5H1134.0V802.5H1136.0V803.5H1138.0V800.5H1140.0V802.5H1142.0V801.5H1144.0V801.5H1146.0V801.5H1148.0V802.5H1150.0V803.5H1152.0V802.5H1154.0V801.5H1156.0V800.5H1158.0V800.5H1160.0V802.5H1162.0V802.5H1164.0V800.5H1166.0V800.5H1168.0V803.5H1170.0V801.5H1172.0V800.5H1174.0V802.5H1176.0V800.5H1178.0V803.5H1180.0V802.5H1182.0V802.5H1184.0V803.5H1186.0V801.5H1188.0V801.5H1190.0V803.5H1192.0V802.5H1194.0V802.5H1196.0V802.5H1198.0V802.5H1200.0V803.5H1202.0V804.5H1204.0V804.5H1206.0V804.5H1208.0V802.5H1210.0V802.5H1212.0V804.5H1214.0V803.5H1216.0V804.5H1218.0V804.5H1220.0V805.5H1222.0V804.5H1224.0V803.5H1226.0V804.5H1228.0V806.5H1230.0V806.5H1232.0V804.5H1234.0V807.5H1236.0V805.5H1238.0V806.5H1240.0V806.5H1242.0V807.5H1244.0V806.5H1246.0V805.5H1248.0V807.5H1250.0V808.5H1252.0V807.5H1254.0V808.5H1256.0V807.5H1258.0V807.5H1260.0V807.5H1262.0V807.5H1264.0V808.5H1266.0V810.5H1268.0V809.5H1270.0V809.5H1272.0V808.5H1274.0V808.5H1276.0V809.5H1278.0V809.5H1280.0V808.5H1282.0V810.5H1284.0V808.5H1286.0V810.5H1288.0V811.5H1290.0V809.5H1292.0V809.5H1294.0V810.5H1296.0V810.5H1298.0V812.5H1300.0V810.5H1302.0V810.5H1304.0V812.5H1306.0V810.5H1308.0V812.5H1310.0V812.5H1312.0V810.5H1314.0V810.5H1316.0V812.5H1318.0V813.5H1320.0V813.5H1322.0V812.5H1324.0V811.5H1326.0V812.5H1328.0V811.5H1330.0V812.5H1332.0V811.5H1334.0V813.5H1336.0V813.5H1338.0V813.5H1340.0V813.5H1342.0V812.5H1344.0V812.5H1346.0V813.5H1348.0V816.5H1350.0V813.5H1352.0V815.5H1354.0V814.5H1356.0V815.5H1358.0V814.5H1360.0V816.5H1362.0V816.5H1364.0V815.5H1366.0V815.5H1368.0V817.5H1370.0V815.5H1372.0V817.5H1374.0V816.5H1376.0V816.5H1378.0V816.5H1380.0V817.5H1382.0V815.5H1384.0V816.5H1386.0V817.5H1388.0V816.5H1390.0V816.5H1392.0V818.5H1394.0V817.5" fill="none" stroke="#7c7c7c" stroke-width="2.2"/>
</g>
<rect x="540.5" y="731.5" width="853" height="153" fill="none" stroke="#c4c4c4" stroke-width="1"/>
<line x1="875.5" y1="731" x2="875.5" y2="885" stroke="#000" stroke-width="1" />
<path d="M889.5 730 L893.8 721.5 L898 730 Z" fill="#22cc44" stroke="#117722" stroke-width="0.6"/>
<text x="901" y="730" font-size="9.6" fill="#000" text-anchor="start" >0.4</text>
<path d="M641.5 886 L650 886 L645.8 894 Z" fill="#22cc44" stroke="#117722" stroke-width="0.6"/>
<text x="652.5" y="894" font-size="9.6" fill="#000" text-anchor="start" >-0.4</text>
<rect x="546" y="802" width="17" height="10" fill="#fff" />
<path d="M531.5 803.5 L540 808 L531.5 812.5 Z" fill="#22dd44" stroke="#000" stroke-width="0.8"/>
<text x="546" y="812" font-size="11" fill="#000" text-anchor="start" textLength="16" lengthAdjust="spacingAndGlyphs" >-0.0</text>
<line x1="540" y1="895.5" x2="1395" y2="895.5" stroke="#000" stroke-width="1" />
<line x1="554.5" y1="895" x2="554.5" y2="904" stroke="#000" stroke-width="1" />
<line x1="579.5" y1="895" x2="579.5" y2="900" stroke="#000" stroke-width="1" />
<line x1="605.5" y1="895" x2="605.5" y2="900" stroke="#000" stroke-width="1" />
<line x1="631.5" y1="895" x2="631.5" y2="900" stroke="#000" stroke-width="1" />
<line x1="656.5" y1="895" x2="656.5" y2="900" stroke="#000" stroke-width="1" />
<line x1="682.5" y1="895" x2="682.5" y2="904" stroke="#000" stroke-width="1" />
<line x1="707.5" y1="895" x2="707.5" y2="900" stroke="#000" stroke-width="1" />
<line x1="733.5" y1="895" x2="733.5" y2="900" stroke="#000" stroke-width="1" />
<line x1="758.5" y1="895" x2="758.5" y2="900" stroke="#000" stroke-width="1" />
<line x1="784.5" y1="895" x2="784.5" y2="900" stroke="#000" stroke-width="1" />
<line x1="810.5" y1="895" x2="810.5" y2="904" stroke="#000" stroke-width="1" />
<line x1="835.5" y1="895" x2="835.5" y2="900" stroke="#000" stroke-width="1" />
<line x1="861.5" y1="895" x2="861.5" y2="900" stroke="#000" stroke-width="1" />
<line x1="886.5" y1="895" x2="886.5" y2="900" stroke="#000" stroke-width="1" />
<line x1="912.5" y1="895" x2="912.5" y2="900" stroke="#000" stroke-width="1" />
<line x1="937.5" y1="895" x2="937.5" y2="904" stroke="#000" stroke-width="1" />
<line x1="963.5" y1="895" x2="963.5" y2="900" stroke="#000" stroke-width="1" />
<line x1="988.5" y1="895" x2="988.5" y2="900" stroke="#000" stroke-width="1" />
<line x1="1014.5" y1="895" x2="1014.5" y2="900" stroke="#000" stroke-width="1" />
<line x1="1040.5" y1="895" x2="1040.5" y2="900" stroke="#000" stroke-width="1" />
<line x1="1065.5" y1="895" x2="1065.5" y2="904" stroke="#000" stroke-width="1" />
<line x1="1091.5" y1="895" x2="1091.5" y2="900" stroke="#000" stroke-width="1" />
<line x1="1116.5" y1="895" x2="1116.5" y2="900" stroke="#000" stroke-width="1" />
<line x1="1142.5" y1="895" x2="1142.5" y2="900" stroke="#000" stroke-width="1" />
<line x1="1167.5" y1="895" x2="1167.5" y2="900" stroke="#000" stroke-width="1" />
<line x1="1193.5" y1="895" x2="1193.5" y2="904" stroke="#000" stroke-width="1" />
<line x1="1218.5" y1="895" x2="1218.5" y2="900" stroke="#000" stroke-width="1" />
<line x1="1244.5" y1="895" x2="1244.5" y2="900" stroke="#000" stroke-width="1" />
<line x1="1270.5" y1="895" x2="1270.5" y2="900" stroke="#000" stroke-width="1" />
<line x1="1295.5" y1="895" x2="1295.5" y2="900" stroke="#000" stroke-width="1" />
<line x1="1321.5" y1="895" x2="1321.5" y2="904" stroke="#000" stroke-width="1" />
<line x1="1346.5" y1="895" x2="1346.5" y2="900" stroke="#000" stroke-width="1" />
<line x1="1372.5" y1="895" x2="1372.5" y2="900" stroke="#000" stroke-width="1" />
<line x1="875.5" y1="895" x2="875.5" y2="904" stroke="#000" stroke-width="1" />
<text x="554.4" y="917" font-size="12.6" fill="#000" text-anchor="middle" textLength="74" lengthAdjust="spacingAndGlyphs" >13:28:20.000</text>
<text x="682.2" y="917" font-size="12.6" fill="#000" text-anchor="middle" textLength="74" lengthAdjust="spacingAndGlyphs" >13:32:30.000</text>
<text x="810.0" y="917" font-size="12.6" fill="#000" text-anchor="middle" textLength="74" lengthAdjust="spacingAndGlyphs" >13:36:40.000</text>
<text x="937.8" y="917" font-size="12.6" fill="#000" text-anchor="middle" textLength="74" lengthAdjust="spacingAndGlyphs" >13:40:50.000</text>
<text x="1065.6" y="917" font-size="12.6" fill="#000" text-anchor="middle" textLength="74" lengthAdjust="spacingAndGlyphs" >13:45:00.000</text>
<text x="1193.4" y="917" font-size="12.6" fill="#000" text-anchor="middle" textLength="74" lengthAdjust="spacingAndGlyphs" >13:49:10.000</text>
<text x="1321.2" y="917" font-size="12.6" fill="#000" text-anchor="middle" textLength="74" lengthAdjust="spacingAndGlyphs" >13:53:20.000</text>
<text x="477.5" y="906.5" font-size="12.3" fill="#000" text-anchor="start" >Time</text>
<text x="477.5" y="920.5" font-size="12.3" fill="#000" text-anchor="start" >(s)</text>
<rect x="541" y="922" width="854" height="13" fill="#e0ebfa" />
<path d="M543.5 928.5 L551 924 L551 933 Z" fill="#8c8c8c"/>
<path d="M1392 928.5 L1384.5 924 L1384.5 933 Z" fill="#8c8c8c"/>
<rect x="861.5" y="922.5" width="283" height="12" fill="url(#thumb)" stroke="#8a8a8a" stroke-width="1"/>
<rect x="1418.5" y="54.5" width="240" height="650" fill="#fff" stroke="#c8c8c8" stroke-width="1"/>
<line x1="1418" y1="70.5" x2="1659" y2="70.5" stroke="#d0d0d0" stroke-width="1" />
<rect x="1420.5" y="56.5" width="12" height="12" fill="#c6c6c6" stroke="#1a1a1a" stroke-width="1"/>
<text x="0" y="0" font-size="12.3" fill="#000" transform="translate(1437.3,66.6) scale(0.945,1)">AFR_NTKa</text>
<text x="0" y="0" font-size="12.3" fill="#000" text-anchor="end" transform="translate(1654.8,66.6) scale(0.97,1)">10.83</text>
<line x1="1418" y1="86.5" x2="1659" y2="86.5" stroke="#d0d0d0" stroke-width="1" />
<rect x="1420.5" y="72.5" width="12" height="12" fill="#f0105a" stroke="#1a1a1a" stroke-width="1"/>
<text x="0" y="0" font-size="12.3" fill="#000" transform="translate(1437.3,82.6) scale(0.945,1)">ECMf</text>
<text x="0" y="0" font-size="12.3" fill="#000" text-anchor="end" transform="translate(1654.8,82.6) scale(0.97,1)">0.744</text>
<line x1="1418" y1="102.5" x2="1659" y2="102.5" stroke="#d0d0d0" stroke-width="1" />
<rect x="1420.5" y="88.5" width="12" height="12" fill="#88ccf8" stroke="#1a1a1a" stroke-width="1"/>
<text x="0" y="0" font-size="12.3" fill="#000" transform="translate(1437.3,98.6) scale(0.945,1)">EquivalenceRatio</text>
<text x="0" y="0" font-size="12.3" fill="#000" text-anchor="end" transform="translate(1654.8,98.6) scale(0.97,1)">1.346</text>
<line x1="1418" y1="118.5" x2="1659" y2="118.5" stroke="#d0d0d0" stroke-width="1" />
<rect x="1420.5" y="104.5" width="12" height="12" fill="#6e6e6e" stroke="#1a1a1a" stroke-width="1"/>
<text x="0" y="0" font-size="12.3" fill="#000" transform="translate(1437.3,114.6) scale(0.945,1)">FuelError</text>
<text x="0" y="0" font-size="12.3" fill="#000" text-anchor="end" transform="translate(1654.8,114.6) scale(0.97,1)">-0.18</text>
<line x1="1418" y1="134.5" x2="1659" y2="134.5" stroke="#d0d0d0" stroke-width="1" />
<rect x="1420.5" y="120.5" width="12" height="12" fill="#0a28e0" stroke="#1a1a1a" stroke-width="1"/>
<text x="0" y="0" font-size="12.3" fill="#000" transform="translate(1437.3,130.6) scale(0.945,1)">LabNTKa_U12</text>
<text x="0" y="0" font-size="12.3" fill="#000" text-anchor="end" transform="translate(1654.8,130.6) scale(0.97,1)">0.743</text>
<rect x="1418.5" y="134.5" width="240" height="16" fill="url(#hl)" stroke="#8f8f8f" stroke-width="1"/>
<rect x="1420.5" y="136.5" width="12" height="12" fill="#000000" stroke="#1a1a1a" stroke-width="1"/>
<text x="0" y="0" font-size="12.3" fill="#000" transform="translate(1437.3,146.6) scale(0.945,1)">Lam1RawL2C_R20</text>
<text x="0" y="0" font-size="12.3" fill="#000" text-anchor="end" transform="translate(1654.8,146.6) scale(0.97,1)">0.744</text>
<rect x="1418.5" y="731.5" width="240" height="153" fill="#fff" stroke="#c8c8c8" stroke-width="1"/>
<line x1="1418" y1="747.5" x2="1659" y2="747.5" stroke="#d0d0d0" stroke-width="1" />
<rect x="1420.5" y="733.5" width="12" height="12" fill="#0000e6" stroke="#1a1a1a" stroke-width="1"/>
<text x="0" y="0" font-size="12.3" fill="#000" transform="translate(1437.3,743.6) scale(0.945,1)">% O2</text>
<text x="0" y="0" font-size="12.3" fill="#000" text-anchor="end" transform="translate(1654.8,743.6) scale(0.97,1)">20.18</text>
<line x1="1418" y1="763.5" x2="1659" y2="763.5" stroke="#d0d0d0" stroke-width="1" />
<rect x="1420.5" y="749.5" width="12" height="12" fill="#105510" stroke="#1a1a1a" stroke-width="1"/>
<text x="0" y="0" font-size="12.3" fill="#000" transform="translate(1437.3,759.6) scale(0.945,1)">ExPressL2C_R11</text>
<text x="0" y="0" font-size="12.3" fill="#000" text-anchor="end" transform="translate(1654.8,759.6) scale(0.97,1)">5</text>
<rect x="1418.5" y="763.5" width="240" height="16" fill="url(#hl)" stroke="#8f8f8f" stroke-width="1"/>
<rect x="1420.5" y="765.5" width="12" height="12" fill="#12e040" stroke="#1a1a1a" stroke-width="1"/>
<text x="0" y="0" font-size="12.3" fill="#000" transform="translate(1437.3,775.6) scale(0.945,1)">LamLabOK</text>
<text x="0" y="0" font-size="12.3" fill="#000" text-anchor="end" transform="translate(1654.8,775.6) scale(0.97,1)">-0.1</text>
<line x1="1418" y1="795.5" x2="1659" y2="795.5" stroke="#d0d0d0" stroke-width="1" />
<rect x="1420.5" y="781.5" width="12" height="12" fill="#808080" stroke="#1a1a1a" stroke-width="1"/>
<text x="0" y="0" font-size="12.3" fill="#000" transform="translate(1437.3,791.6) scale(0.945,1)">LambdaLabError</text>
<text x="0" y="0" font-size="12.3" fill="#000" text-anchor="end" transform="translate(1654.8,791.6) scale(0.97,1)">-0.13</text>
<line x1="1418" y1="811.5" x2="1659" y2="811.5" stroke="#d0d0d0" stroke-width="1" />
<rect x="1420.5" y="797.5" width="12" height="12" fill="#20a810" stroke="#1a1a1a" stroke-width="1"/>
<text x="0" y="0" font-size="12.3" fill="#000" transform="translate(1437.3,807.6) scale(0.945,1)">bap</text>
<text x="0" y="0" font-size="12.3" fill="#000" text-anchor="end" transform="translate(1654.8,807.6) scale(0.97,1)">995</text>
<line x1="1418" y1="827.5" x2="1659" y2="827.5" stroke="#d0d0d0" stroke-width="1" />
<rect x="1420.5" y="813.5" width="12" height="12" fill="#12a8a8" stroke="#1a1a1a" stroke-width="1"/>
<text x="0" y="0" font-size="12.3" fill="#000" transform="translate(1437.3,823.6) scale(0.945,1)">egt1</text>
<text x="0" y="0" font-size="12.3" fill="#000" text-anchor="end" transform="translate(1654.8,823.6) scale(0.97,1)">23</text>
<line x1="1418" y1="843.5" x2="1659" y2="843.5" stroke="#d0d0d0" stroke-width="1" />
<rect x="1420.5" y="829.5" width="12" height="12" fill="#f01848" stroke="#1a1a1a" stroke-width="1"/>
<text x="0" y="0" font-size="12.3" fill="#000" transform="translate(1437.3,839.6) scale(0.945,1)">egt2</text>
<text x="0" y="0" font-size="12.3" fill="#000" text-anchor="end" transform="translate(1654.8,839.6) scale(0.97,1)">69</text>
<text x="0" y="970.6" font-size="12.3" fill="#148c14" text-anchor="start" textLength="441.5" lengthAdjust="spacingAndGlyphs" >.\DownloadedData\RR S12\2025-10-12 12-57-50 plus 0h00m00s S12#27290.SD</text>
<text x="0" y="984.6" font-size="12.3" fill="#148c14" text-anchor="start" textLength="582.4" lengthAdjust="spacingAndGlyphs" >S12(27290) Cal(RICESP-RR286-NTKcalibration-56) Cfg(RICESP-RRL020-LAMBDA) Boot(1.80) Main(1.714.3)</text>
<text x="0" y="998.6" font-size="12.3" fill="#148c14" text-anchor="start" textLength="323.5" lengthAdjust="spacingAndGlyphs" >DateTime(2025\10\12 12:57) UncompressedSize(33.5 MB)</text>
<text x="0" y="1012.6" font-size="12.3" fill="#8a8a8a" text-anchor="start" textLength="373.9" lengthAdjust="spacingAndGlyphs" >cal benz LZA09-E1 ECM Autronic master chest cam live stream kuntz</text>
<text x="957.6" y="970.6" font-size="12.3" fill="#ec9030" text-anchor="start" textLength="246.4" lengthAdjust="spacingAndGlyphs" >Lam1RawL2C_R20 (100Hz) samples(486468)</text>
<text x="957.6" y="984.6" font-size="12.3" fill="#ec9030" text-anchor="start" textLength="172.8" lengthAdjust="spacingAndGlyphs" >Unit(Combustion Ratio,Lambda)</text>
<text x="957.6" y="998.6" font-size="12.3" fill="#ec9030" text-anchor="start" textLength="315.7" lengthAdjust="spacingAndGlyphs" >convert using y=(x/1000)+0 to Lambda in the range 0..2</text>
<text x="957.6" y="1012.6" font-size="12.3" fill="#ec9030" text-anchor="start" textLength="165" lengthAdjust="spacingAndGlyphs" >UnitGroup(Lam1RawL2C_R20)</text>
<text x="972.3" y="1026.6" font-size="12.3" fill="#ec9030" text-anchor="start" textLength="99.1" lengthAdjust="spacingAndGlyphs" >Lam1RawL2C_R20</text>
<rect x="945" y="959" width="12" height="78" fill="#e0ebfa" />
<path d="M946.5 969 L951 961 L955.5 969 Z" fill="#777"/>
<path d="M946.5 1027 L951 1035 L955.5 1027 Z" fill="#777"/>
<rect x="946.5" y="972.5" width="10" height="47" fill="url(#vthumb)" stroke="#707070" stroke-width="1"/>
<line x1="1410.5" y1="959" x2="1410.5" y2="1037" stroke="#bdbdbd" stroke-width="1" />
<text x="1418.5" y="970.8" font-size="12.1" fill="#000" text-anchor="start" textLength="85" lengthAdjust="spacingAndGlyphs" >Burst Log Mode</text>
<text x="1418.5" y="998.6" font-size="12.1" fill="#000" text-anchor="start" textLength="97" lengthAdjust="spacingAndGlyphs" >BASE, ENHANCED</text>
</svg></body></html>
